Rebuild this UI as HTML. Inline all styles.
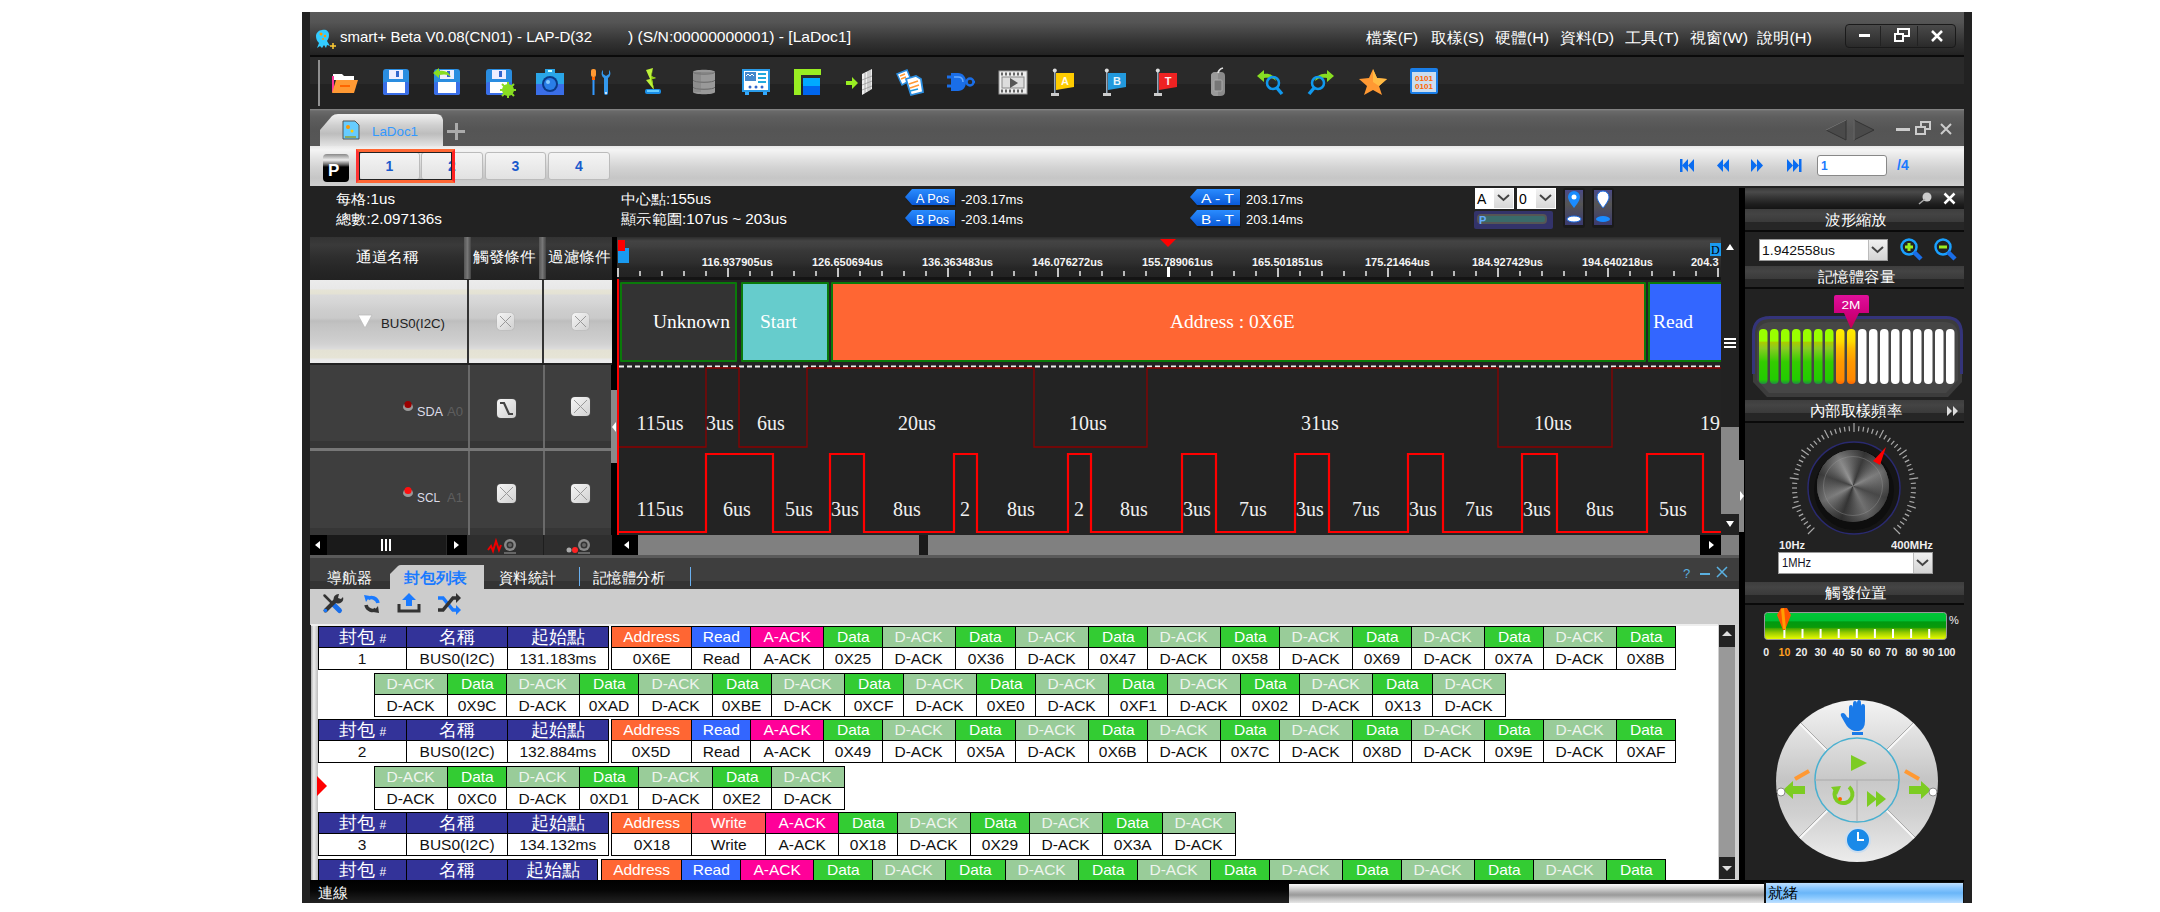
<!DOCTYPE html><html><head><meta charset="utf-8"><style>
html,body{margin:0;padding:0;background:#fff;width:2160px;height:912px;overflow:hidden}
body{position:relative;font-family:"Liberation Sans",sans-serif}
div{position:absolute;box-sizing:border-box}
.t{white-space:nowrap;line-height:1}
svg{position:absolute;overflow:visible}
</style></head><body>
<div style="left:302px;top:12px;width:1670px;height:891px;background:#222"></div><div style="left:310px;top:12px;width:1654px;height:43px;background:linear-gradient(#5a5a5a 0px,#555 10px,#444 20px,#333 30px,#262626 40px,#222 43px)"></div><div style="left:310px;top:55px;width:1654px;height:2px;background:#0a0a0a"></div><div style="left:310px;top:57px;width:1654px;height:27px;background:#2a2a2a"></div><div style="left:310px;top:84px;width:1654px;height:25px;background:#222"></div><svg style="left:314px;top:28px" width="24" height="24" viewBox="0 0 24 24">
<path d="M8 2c4-1 7 1 7 5c0 3-1 4-2 6l3 5l-3-1l-1 3l-2-3l-2 3l-2-2l-3 2l2-5c-2-2-3-4-3-7c0-3 3-6 6-6z" fill="#33ccff"/>
<circle cx="7" cy="6" r="1.5" fill="#f90"/><circle cx="11" cy="8" r="1.3" fill="#f90"/><circle cx="9" cy="11" r="1" fill="#f90"/>
<path d="M19 15v6M16 18h6" stroke="#fc3" stroke-width="1.5"/></svg><div id="f1" class="t" style="left:340.00px;top:30.23px;font-family:'Liberation Sans',sans-serif;font-size:14.5px;color:#fff;transform-origin:0 0;transform:scaleX(1.0337);">smart+ Beta V0.08(CN01) - LAP-D(32</div><div id="f2" class="t" style="left:628.00px;top:30.23px;font-family:'Liberation Sans',sans-serif;font-size:14.5px;color:#fff;transform-origin:0 0;transform:scaleX(1.0807);">) (S/N:00000000001) - [LaDoc1]</div><div id="f3" class="t" style="left:1366.00px;top:30.30px;font-family:'Liberation Sans',sans-serif;font-size:15px;color:#fff;transform-origin:0 0;transform:scaleX(1.0579);">檔案(F)</div><div id="f4" class="t" style="left:1431.00px;top:30.30px;font-family:'Liberation Sans',sans-serif;font-size:15px;color:#fff;transform-origin:0 0;transform:scaleX(1.0600);">取樣(S)</div><div id="f5" class="t" style="left:1495.00px;top:30.30px;font-family:'Liberation Sans',sans-serif;font-size:15px;color:#fff;transform-origin:0 0;transform:scaleX(1.0624);">硬體(H)</div><div id="f6" class="t" style="left:1560.00px;top:30.30px;font-family:'Liberation Sans',sans-serif;font-size:15px;color:#fff;transform-origin:0 0;transform:scaleX(1.0624);">資料(D)</div><div id="f7" class="t" style="left:1625.00px;top:30.30px;font-family:'Liberation Sans',sans-serif;font-size:15px;color:#fff;transform-origin:0 0;transform:scaleX(1.0985);">工具(T)</div><div id="f8" class="t" style="left:1690.00px;top:30.30px;font-family:'Liberation Sans',sans-serif;font-size:15px;color:#fff;transform-origin:0 0;transform:scaleX(1.0710);">視窗(W)</div><div id="f9" class="t" style="left:1757.00px;top:30.30px;font-family:'Liberation Sans',sans-serif;font-size:15px;color:#fff;transform-origin:0 0;transform:scaleX(1.0821);">說明(H)</div><div style="left:1845px;top:24px;width:111px;height:24px;border-radius:4px;background:linear-gradient(#4a4a4a,#2a2a2a);border:1px solid #1a1a1a"></div><div style="left:1880px;top:26px;width:1px;height:20px;background:#222"></div><div style="left:1917px;top:26px;width:1px;height:20px;background:#222"></div><div style="left:1859px;top:34px;width:11px;height:3px;background:#fff"></div><div style="left:1897px;top:28px;width:13px;height:9px;border:2px solid #fff;"></div><div style="left:1894px;top:33px;width:10px;height:9px;border:2px solid #fff;background:#333"></div><svg style="left:1930px;top:29px" width="14" height="14"><path d="M2 2L12 12M12 2L2 12" stroke="#fff" stroke-width="2.5"/></svg><div style="left:318px;top:60px;width:2px;height:46px;background:linear-gradient(90deg,#555,#ccc,#555)"></div><svg style="left:330.5px;top:68px" width="28" height="28" viewBox="0 0 28 28"><path d="M2 6h9l2 2h10v4H2z" fill="#fff"/><path d="M1 8h2v16H1z" fill="#f39"/><path d="M5 12h22l-4 13H1z" fill="#f93"/><path d="M9 17h10v2H9z" fill="#f60"/></svg><svg style="left:381.9px;top:68px" width="28" height="28" viewBox="0 0 28 28"><rect x="1" y="1" width="26" height="26" rx="3" fill="#2a8de0"/><rect x="1" y="14" width="26" height="13" rx="2" fill="#3a6ee8"/><rect x="7" y="2" width="14" height="9" fill="#eef"/><rect x="14" y="3" width="3" height="6" fill="#36c"/><rect x="5" y="14" width="18" height="11" fill="#fff"/></svg><svg style="left:433.3px;top:68px" width="28" height="28" viewBox="0 0 28 28"><rect x="1" y="1" width="26" height="26" rx="3" fill="#2a8de0"/><rect x="1" y="14" width="26" height="13" rx="2" fill="#3a6ee8"/><rect x="7" y="2" width="14" height="9" fill="#eef"/><rect x="14" y="3" width="3" height="6" fill="#36c"/><rect x="5" y="14" width="18" height="11" fill="#fff"/><path d="M0 5l6-5v3c6-1 10 1 12 6c-3-3-7-3-12-2v3z" fill="#8d2"/></svg><svg style="left:484.7px;top:68px" width="28" height="28" viewBox="0 0 28 28"><rect x="1" y="1" width="26" height="26" rx="3" fill="#2a8de0"/><rect x="1" y="14" width="26" height="13" rx="2" fill="#3a6ee8"/><rect x="7" y="2" width="14" height="9" fill="#eef"/><rect x="14" y="3" width="3" height="6" fill="#36c"/><rect x="5" y="14" width="18" height="11" fill="#fff"/><circle cx="23" cy="22" r="6" fill="#8d2"/><circle cx="23" cy="22" r="2" fill="#2a8de0"/><path d="M23 14v16M15 22h16M17 16l12 12M29 16l-12 12" stroke="#8d2" stroke-width="2"/></svg><svg style="left:536.1px;top:68px" width="28" height="28" viewBox="0 0 28 28"><rect x="0" y="5" width="28" height="22" fill="#2aa6e8"/><rect x="0" y="16" width="28" height="11" fill="#3a6ee8"/><rect x="9" y="1" width="10" height="5" fill="#2aa6e8"/><rect x="12" y="2" width="4" height="2" fill="#cff"/><circle cx="14" cy="16" r="8" fill="#0b3a88"/><circle cx="14" cy="16" r="6" fill="#2a7ee8"/><circle cx="12" cy="14" r="2" fill="#8cf"/></svg><svg style="left:587.5px;top:68px" width="28" height="28" viewBox="0 0 28 28"><rect x="3" y="1" width="5" height="8" rx="2" fill="#f93"/><rect x="4" y="9" width="3" height="3" fill="#f60"/><rect x="4.5" y="12" width="2" height="15" fill="#39f"/><path d="M15 2c-2 2-2 6 1 8v15a2 2 0 0 0 4 0V10c3-2 3-6 1-8v4l-3 2l-3-2z" fill="#39e"/><circle cx="18" cy="25" r="1" fill="#fff"/></svg><svg style="left:638.9px;top:68px" width="28" height="28" viewBox="0 0 28 28"><path d="M7 2L14 0L12 8L17 10L13 11L15 22L7 12L11 11z" fill="#bdf23a"/><path d="M14 0L12 8L17 10L13 11L15 22L12 12z" fill="#8ccc10"/><rect x="6" y="21" width="16" height="5" rx="2" fill="#1a8ee8"/><rect x="8" y="22" width="12" height="2" fill="#6cf"/></svg><svg style="left:690.3px;top:68px" width="28" height="28" viewBox="0 0 28 28"><path d="M3 4c0-3 22-3 22 0v20c0 3-22 3-22 0z" fill="#999"/><path d="M3 4c0 3 22 3 22 0" stroke="#777" fill="#888"/><path d="M3 12c0 3 22 3 22 0M3 19c0 3 22 3 22 0" stroke="#666" fill="none" stroke-width="1"/><rect x="3" y="4" width="8" height="20" fill="#777" opacity=".4"/></svg><svg style="left:741.7px;top:68px" width="28" height="28" viewBox="0 0 28 28"><rect x="0" y="1" width="28" height="23" fill="#2a9be8"/><rect x="2" y="3" width="24" height="19" fill="#fff"/><rect x="3" y="4" width="11" height="9" fill="#48c"/><path d="M4 8l2-2l2 2l2-2l2 2" stroke="#fff" fill="none"/><rect x="16" y="5" width="8" height="2" fill="#2ad"/><rect x="16" y="9" width="8" height="2" fill="#2ad"/><rect x="16" y="13" width="8" height="2" fill="#2ad"/><circle cx="8" cy="19" r="1.5" fill="#36c"/><circle cx="14" cy="19" r="1.5" fill="#36c"/><circle cx="20" cy="19" r="1.5" fill="#36c"/><rect x="3" y="24" width="4" height="3" fill="#3af"/><rect x="21" y="24" width="4" height="3" fill="#3af"/></svg><svg style="left:793.1px;top:68px" width="28" height="28" viewBox="0 0 28 28"><rect x="1" y="1" width="27" height="6" fill="#9e2"/><rect x="1" y="1" width="7" height="26" fill="#9e2"/><rect x="10" y="10" width="17" height="17" fill="#0af"/><rect x="10" y="18" width="17" height="9" fill="#06e"/></svg><svg style="left:844.5px;top:68px" width="28" height="28" viewBox="0 0 28 28"><path d="M1 13h6v-4l6 6l-6 6v-4H1z" fill="#9e2"/><path d="M17 6l10-5v20l-10 6z" fill="#eee"/><path d="M17 12l10-4M17 17l10-4M17 22l10-4M20 5v20M23 3v20M25 2v20" stroke="#999" stroke-width=".8"/></svg><svg style="left:895.9px;top:68px" width="28" height="28" viewBox="0 0 28 28"><path d="M1 6L11 2L15 12L6 17z" fill="#fff" stroke="#2a8de0" stroke-width="1.5"/><path d="M4 8L9 6M5 11L10 9" stroke="#f93" stroke-width="1.5"/><path d="M10 11L20 8L25 11L27 24L15 27z" fill="#fff" stroke="#2a8de0" stroke-width="1.8"/><path d="M13 16L22 13M14 20L23 17" stroke="#f93" stroke-width="1.6"/><path d="M14 23L22 21" stroke="#29d" stroke-width="1.5"/></svg><svg style="left:947.3px;top:68px" width="28" height="28" viewBox="0 0 28 28"><path d="M0 9h5M0 18h5" stroke="#1a6ee8" stroke-width="3"/><path d="M4 5h7c5 0 8 4 8 9s-3 9-8 9H4z" fill="#1a6ee8"/><circle cx="23" cy="14" r="3.5" fill="none" stroke="#1a6ee8" stroke-width="2.5"/><path d="M26 14h2" stroke="#1a6ee8" stroke-width="2"/><path d="M7 9h4c3 0 5 2 5 5" stroke="#6af" fill="none" stroke-width="1.5"/></svg><svg style="left:998.7px;top:68px" width="28" height="28" viewBox="0 0 28 28"><rect x="0" y="3" width="28" height="23" fill="#eee"/><rect x="0" y="3" width="28" height="23" fill="none" stroke="#999"/><path d="M2 6h24M2 23h24" stroke="#666" stroke-width="3" stroke-dasharray="2 2"/><rect x="3" y="9" width="22" height="11" fill="#ddd" stroke="#888"/><path d="M11 10l8 5l-8 5z" fill="#555"/></svg><svg style="left:1050.1px;top:68px" width="28" height="28" viewBox="0 0 28 28"><rect x="4" y="2" width="1.5" height="24" fill="#9ab"/><circle cx="4.8" cy="2.5" r="2" fill="#ddd"/><rect x="1" y="25" width="8" height="3" fill="#ccc"/><path d="M6 5l18 0l0 14l-18 3z" fill="#fc0"/><text x="15" y="17" font-size="11" font-family="Liberation Sans" font-weight="bold" fill="#fff" text-anchor="middle" opacity=".9">A</text></svg><svg style="left:1101.5px;top:68px" width="28" height="28" viewBox="0 0 28 28"><rect x="4" y="2" width="1.5" height="24" fill="#9ab"/><circle cx="4.8" cy="2.5" r="2" fill="#ddd"/><rect x="1" y="25" width="8" height="3" fill="#ccc"/><path d="M6 5l18 0l0 14l-18 3z" fill="#29d"/><text x="15" y="17" font-size="11" font-family="Liberation Sans" font-weight="bold" fill="#fff" text-anchor="middle" opacity=".9">B</text></svg><svg style="left:1152.9px;top:68px" width="28" height="28" viewBox="0 0 28 28"><rect x="4" y="2" width="1.5" height="24" fill="#9ab"/><circle cx="4.8" cy="2.5" r="2" fill="#ddd"/><rect x="1" y="25" width="8" height="3" fill="#ccc"/><path d="M6 5l18 0l0 14l-18 3z" fill="#e22"/><text x="15" y="17" font-size="11" font-family="Liberation Sans" font-weight="bold" fill="#fff" text-anchor="middle" opacity=".9">T</text></svg><svg style="left:1204.3px;top:68px" width="28" height="28" viewBox="0 0 28 28"><path d="M7 8Q7 4 12 4H17Q21 4 21 8V24Q21 28 16 28H12Q7 28 7 24z" fill="#8a8a8a"/><path d="M7 8Q7 4 12 4H14V28H12Q7 28 7 24z" fill="#9a9a9a"/><rect x="10" y="12" width="8" height="11" rx="1" fill="#777" stroke="#aaa"/><path d="M14 5Q15 1 19 0" stroke="#ddd" stroke-width="1.8" fill="none"/></svg><svg style="left:1255.7px;top:68px" width="28" height="28" viewBox="0 0 28 28"><path d="M1 8l7-6v4c6-1 11 2 12 7c-3-3-7-4-12-3v4z" fill="#8d2"/><circle cx="17" cy="15" r="6" fill="none" stroke="#19e" stroke-width="2.5"/><path d="M21 20l5 6" stroke="#19e" stroke-width="3.5"/></svg><svg style="left:1307.1px;top:68px" width="28" height="28" viewBox="0 0 28 28"><path d="M27 8l-7-6v4c-6-1-11 2-12 7c3-3 7-4 12-3v4z" fill="#8d2"/><circle cx="11" cy="15" r="6" fill="none" stroke="#19e" stroke-width="2.5"/><path d="M7 20l-5 6" stroke="#19e" stroke-width="3.5"/></svg><svg style="left:1358.5px;top:68px" width="28" height="28" viewBox="0 0 28 28"><path d="M14 1l4 9l10 1l-8 7l3 9l-9-5l-9 5l3-9l-8-7l10-1z" fill="#f93"/><path d="M14 1l4 9l10 1l-8 7l-6-4z" fill="#fb4"/></svg><svg style="left:1409.9px;top:68px" width="28" height="28" viewBox="0 0 28 28"><rect x="0" y="0" width="28" height="26" rx="2" fill="#1a7ee8"/><rect x="2" y="4" width="24" height="20" fill="#cde"/><text x="14" y="13" font-size="8" font-family="Liberation Sans" font-weight="bold" fill="#f60" text-anchor="middle">0101</text><text x="14" y="21" font-size="8" font-family="Liberation Sans" font-weight="bold" fill="#f60" text-anchor="middle">0101</text></svg><div style="left:310px;top:109px;width:1654px;height:37px;background:linear-gradient(#8a8a8a 0px,#6a6a6a 2px,#5e5e5e 8px,#555 20px,#575757 37px)"></div><svg style="left:320px;top:114px" width="124" height="33"><path d="M0 33V16L12 2Q14 0 18 0H116Q122 0 123 6V33z" fill="url(#tabg)"/><defs><linearGradient id="tabg" x1="0" y1="0" x2="0" y2="1"><stop offset="0" stop-color="#f0f0f0"/><stop offset=".35" stop-color="#cfcfcf"/><stop offset=".6" stop-color="#bdbdbd"/><stop offset="1" stop-color="#e6e6e6"/></linearGradient></defs></svg><svg style="left:342px;top:120px" width="18" height="20" viewBox="0 0 18 20"><path d="M1 1h12l4 4v14H1z" fill="#6cf" stroke="#555" stroke-width="1"/><circle cx="6" cy="7" r="2" fill="#f90"/><circle cx="10" cy="11" r="1.5" fill="#fc0"/><path d="M3 17h11" stroke="#8a6" stroke-width="2"/></svg><div id="f10" class="t" style="left:372.00px;top:124.50px;font-family:'Liberation Sans',sans-serif;font-size:13px;color:#3399ff;transform-origin:0 0;transform:scaleX(1.0265);">LaDoc1</div><div style="left:447px;top:130px;width:18px;height:3px;background:#aaa"></div><div style="left:454.5px;top:123px;width:3px;height:17px;background:#aaa"></div><svg style="left:1824px;top:119px" width="52" height="22"><path d="M22 1L2 11L22 21z" fill="#4a4a4a" stroke="#333"/><path d="M30 1L50 11L30 21z" fill="#4a4a4a" stroke="#333"/><path d="M22 1L2 11" stroke="#777"/><path d="M30 1V21" stroke="#777"/></svg><div style="left:1896px;top:128px;width:14px;height:3px;background:#ccc"></div><div style="left:1920px;top:121px;width:11px;height:9px;border:2px solid #ccc"></div><div style="left:1915px;top:126px;width:11px;height:9px;border:2px solid #ccc;background:#555"></div><svg style="left:1939px;top:122px" width="14" height="14"><path d="M2 2L12 12M12 2L2 12" stroke="#ccc" stroke-width="2"/></svg><div style="left:310px;top:146px;width:1654px;height:40px;background:linear-gradient(#e8e8e8 0px,#f4f4f4 4px,#e4e4e4 12px,#d2d2d2 22px,#c6c6c6 32px,#cfcfcf 40px)"></div><div style="left:323px;top:154px;width:26px;height:28px;border-radius:4px;background:linear-gradient(#888 0px,#eee 6px,#555 11px,#000 13px,#000 28px)"></div><div id="f11" class="t" style="left:328.00px;top:161.61px;font-family:'Liberation Sans',sans-serif;font-size:17px;color:#fff;font-weight:bold;transform-origin:0 0;">P</div><div style="left:359px;top:152px;width:61px;height:28px;border-radius:3px;background:linear-gradient(#f4f4f4,#e2e2e2);border:1px solid #bbb"></div><div id="f12" class="t" style="left:385.60px;top:159.15px;font-family:'Liberation Sans',sans-serif;font-size:14px;color:#1a5acc;font-weight:bold;transform-origin:3.90px 0;">1</div><div style="left:421px;top:152px;width:62px;height:28px;border-radius:3px;background:linear-gradient(#f4f4f4,#e2e2e2);border:1px solid #bbb"></div><div id="f13" class="t" style="left:448.10px;top:159.15px;font-family:'Liberation Sans',sans-serif;font-size:14px;color:#1a5acc;font-weight:bold;transform-origin:3.90px 0;">2</div><div style="left:485px;top:152px;width:61px;height:28px;border-radius:3px;background:linear-gradient(#f4f4f4,#e2e2e2);border:1px solid #bbb"></div><div id="f14" class="t" style="left:511.60px;top:159.15px;font-family:'Liberation Sans',sans-serif;font-size:14px;color:#1a5acc;font-weight:bold;transform-origin:3.90px 0;">3</div><div style="left:548px;top:152px;width:62px;height:28px;border-radius:3px;background:linear-gradient(#f4f4f4,#e2e2e2);border:1px solid #bbb"></div><div id="f15" class="t" style="left:575.10px;top:159.15px;font-family:'Liberation Sans',sans-serif;font-size:14px;color:#1a5acc;font-weight:bold;transform-origin:3.90px 0;">4</div><div style="left:356px;top:149px;width:99px;height:34px;border:3px solid #ff6633;border-left-color:#f33;border-right-color:#f22"></div><div style="left:359px;top:152px;width:93px;height:28px;border:1px solid #222"></div><svg style="left:1678px;top:158px" width="130" height="16"><g fill="#0a6cf0"><rect x="2" y="1" width="2.5" height="13"/><path d="M4 7.5L10 1V14z"/><path d="M10 7.5L16 1V14z"/><path d="M39 7.5L45 1V14z"/><path d="M45 7.5L51 1V14z"/><path d="M73 1L79 7.5L73 14z"/><path d="M79 1L85 7.5L79 14z"/><path d="M109 1L115 7.5L109 14z"/><path d="M115 1L121 7.5L115 14z"/><rect x="121" y="1" width="2.5" height="13"/></g></svg><div style="left:1817px;top:155px;width:70px;height:21px;background:#fff;border:1px solid #888;border-radius:3px"></div><div id="f16" class="t" style="left:1821.00px;top:159.84px;font-family:'Liberation Sans',sans-serif;font-size:12px;color:#1a7aff;font-weight:bold;transform-origin:0 0;">1</div><div id="f17" class="t" style="left:1897.00px;top:158.15px;font-family:'Liberation Sans',sans-serif;font-size:14px;color:#1a7aff;font-weight:bold;transform-origin:0 0;">/4</div><div style="left:310px;top:186px;width:1429px;height:51px;background:#222"></div><div id="f18" class="t" style="left:336.00px;top:191.65px;font-family:'Liberation Sans',sans-serif;font-size:14px;color:#fff;transform-origin:0 0;transform:scaleX(1.0832);">每格:1us</div><div id="f19" class="t" style="left:336.00px;top:211.65px;font-family:'Liberation Sans',sans-serif;font-size:14px;color:#fff;transform-origin:0 0;transform:scaleX(1.0894);">總數:2.097136s</div><div id="f20" class="t" style="left:621.00px;top:191.65px;font-family:'Liberation Sans',sans-serif;font-size:14px;color:#fff;transform-origin:0 0;transform:scaleX(1.0708);">中心點:155us</div><div id="f21" class="t" style="left:621.00px;top:211.65px;font-family:'Liberation Sans',sans-serif;font-size:14px;color:#fff;transform-origin:0 0;transform:scaleX(1.0911);">顯示範圍:107us ~ 203us</div><svg style="left:905px;top:189px" width="52" height="18"><path d="M8 1H51V17H8L1 9z" fill="#1a1a1a" transform="translate(0,1)"/><path d="M7 0H50V16H7L0 8z" fill="url(#bg905189)"/><defs><linearGradient id="bg905189" x1="0" y1="0" x2="0" y2="1"><stop offset="0" stop-color="#2a8cff"/><stop offset="1" stop-color="#0a5ad8"/></linearGradient></defs></svg><div id="f22" class="t" style="left:916.00px;top:191.50px;font-family:'Liberation Sans',sans-serif;font-size:13px;color:#fff;transform-origin:0 0;transform:scaleX(0.9715);">A Pos</div><svg style="left:905px;top:210px" width="52" height="18"><path d="M8 1H51V17H8L1 9z" fill="#1a1a1a" transform="translate(0,1)"/><path d="M7 0H50V16H7L0 8z" fill="url(#bg905210)"/><defs><linearGradient id="bg905210" x1="0" y1="0" x2="0" y2="1"><stop offset="0" stop-color="#2a8cff"/><stop offset="1" stop-color="#0a5ad8"/></linearGradient></defs></svg><div id="f23" class="t" style="left:916.00px;top:212.50px;font-family:'Liberation Sans',sans-serif;font-size:13px;color:#fff;transform-origin:0 0;transform:scaleX(0.9514);">B Pos</div><svg style="left:1190px;top:189px" width="52" height="18"><path d="M8 1H51V17H8L1 9z" fill="#1a1a1a" transform="translate(0,1)"/><path d="M7 0H50V16H7L0 8z" fill="url(#bg1190189)"/><defs><linearGradient id="bg1190189" x1="0" y1="0" x2="0" y2="1"><stop offset="0" stop-color="#2a8cff"/><stop offset="1" stop-color="#0a5ad8"/></linearGradient></defs></svg><div id="f24" class="t" style="left:1201.00px;top:191.50px;font-family:'Liberation Sans',sans-serif;font-size:13px;color:#fff;transform-origin:0 0;transform:scaleX(1.2124);">A - T</div><svg style="left:1190px;top:210px" width="52" height="18"><path d="M8 1H51V17H8L1 9z" fill="#1a1a1a" transform="translate(0,1)"/><path d="M7 0H50V16H7L0 8z" fill="url(#bg1190210)"/><defs><linearGradient id="bg1190210" x1="0" y1="0" x2="0" y2="1"><stop offset="0" stop-color="#2a8cff"/><stop offset="1" stop-color="#0a5ad8"/></linearGradient></defs></svg><div id="f25" class="t" style="left:1201.00px;top:212.50px;font-family:'Liberation Sans',sans-serif;font-size:13px;color:#fff;transform-origin:0 0;transform:scaleX(1.1812);">B - T</div><div id="f26" class="t" style="left:961.00px;top:192.50px;font-family:'Liberation Sans',sans-serif;font-size:13px;color:#fff;transform-origin:0 0;transform:scaleX(1.0094);">-203.17ms</div><div id="f27" class="t" style="left:961.00px;top:213.00px;font-family:'Liberation Sans',sans-serif;font-size:13px;color:#fff;transform-origin:0 0;transform:scaleX(1.0094);">-203.14ms</div><div id="f28" class="t" style="left:1246.00px;top:192.50px;font-family:'Liberation Sans',sans-serif;font-size:13px;color:#fff;transform-origin:0 0;transform:scaleX(0.9984);">203.17ms</div><div id="f29" class="t" style="left:1246.00px;top:213.00px;font-family:'Liberation Sans',sans-serif;font-size:13px;color:#fff;transform-origin:0 0;transform:scaleX(0.9984);">203.14ms</div><div style="left:1475px;top:188px;width:39px;height:21px;background:#fff"></div><div style="left:1494px;top:189px;width:19px;height:19px;background:linear-gradient(#f2f2f2,#d8d8d8)"></div><svg style="left:1497px;top:194px" width="13" height="8"><path d="M1 1L6.5 6L12 1" stroke="#444" stroke-width="2" fill="none"/></svg><div id="f30" class="t" style="left:1477.00px;top:192.15px;font-family:'Liberation Sans',sans-serif;font-size:14px;color:#000;transform-origin:0 0;">A</div><div style="left:1517px;top:188px;width:39px;height:21px;background:#fff"></div><div style="left:1536px;top:189px;width:19px;height:19px;background:linear-gradient(#f2f2f2,#d8d8d8)"></div><svg style="left:1539px;top:194px" width="13" height="8"><path d="M1 1L6.5 6L12 1" stroke="#444" stroke-width="2" fill="none"/></svg><div id="f31" class="t" style="left:1519.00px;top:192.15px;font-family:'Liberation Sans',sans-serif;font-size:14px;color:#000;transform-origin:0 0;">0</div><div style="left:1474px;top:211px;width:79px;height:18px;background:#33336a;border-radius:2px"></div><div style="left:1477px;top:214px;width:70px;height:10px;background:#3a6a6a;border:2px solid #555;border-radius:4px"></div><div id="f32" class="t" style="left:1479.00px;top:214.69px;font-family:'Liberation Sans',sans-serif;font-size:11px;color:#6af;font-weight:bold;transform-origin:0 0;">P</div><div style="left:1563px;top:188px;width:22px;height:40px;background:#1a1a1a;border-radius:3px"></div><div style="left:1565px;top:190px;width:18px;height:35px;background:linear-gradient(#4a4a88,#555 40%,#3a3a70)"></div><svg style="left:1564px;top:188px" width="20" height="40"><path d="M10 3a6 6 0 0 1 6 6c0 4-6 11-6 11s-6-7-6-11a6 6 0 0 1 6-6z" fill="#1a8cff"/><circle cx="10" cy="9" r="2.5" fill="#fff"/><ellipse cx="10" cy="31" rx="7" ry="3" fill="#fff" stroke="#1a6ee8"/></svg><div style="left:1592px;top:188px;width:22px;height:40px;background:#1a1a1a;border-radius:3px"></div><div style="left:1594px;top:190px;width:18px;height:35px;background:linear-gradient(#4a4a88,#555 40%,#3a3a70)"></div><svg style="left:1593px;top:188px" width="20" height="40"><path d="M10 3a6 6 0 0 1 6 6c0 4-6 11-6 11s-6-7-6-11a6 6 0 0 1 6-6z" fill="#fff" stroke="#1a6ee8"/><ellipse cx="10" cy="31" rx="7" ry="3" fill="#1a8cff"/></svg><div style="left:310px;top:237px;width:302px;height:42px;background:linear-gradient(#333 0px,#3a3a3a 8px,#2e2e2e 20px,#262626 32px,#222 42px)"></div><div style="left:464px;top:237px;width:7px;height:42px;background:linear-gradient(90deg,#555,#777,#444)"></div><div style="left:539px;top:237px;width:7px;height:42px;background:linear-gradient(90deg,#555,#777,#444)"></div><div id="f33" class="t" style="left:356.00px;top:249.30px;font-family:'Liberation Sans',sans-serif;font-size:15px;color:#fff;transform-origin:0 0;transform:scaleX(1.0500);">通道名稱</div><div id="f34" class="t" style="left:473.00px;top:249.30px;font-family:'Liberation Sans',sans-serif;font-size:15px;color:#fff;transform-origin:0 0;transform:scaleX(1.0500);">觸發條件</div><div id="f35" class="t" style="left:548.00px;top:249.30px;font-family:'Liberation Sans',sans-serif;font-size:15px;color:#fff;transform-origin:0 0;transform:scaleX(1.0500);">過濾條件</div><div style="left:612px;top:237px;width:5px;height:318px;background:#000"></div><div style="left:310px;top:280px;width:302px;height:83px;background:linear-gradient(#ececec 0px,#e8e8e8 9px,#e6e4d6 10px,#e4e2d4 14px,#dadada 15px,#d6d6d6 22px,#cecece 30px,#cacaca 38px,#bdbdbd 41px,#c2c2c2 44px,#c8c8c8 52px,#cccccc 58px,#d2d2d2 64px,#dcdcdc 69px,#e4e2d4 70px,#e6e4d6 78px,#eaeaea 79px,#ececec 83px)"></div><div style="left:310px;top:363px;width:302px;height:2px;background:#222"></div><div style="left:467px;top:280px;width:2px;height:83px;background:#333"></div><div style="left:542px;top:280px;width:2px;height:83px;background:#333"></div><svg style="left:357px;top:314px" width="16" height="15"><path d="M1 1H15L8 14z" fill="#fff" stroke="#bbb" stroke-width=".8"/></svg><div id="f36" class="t" style="left:381.00px;top:316.50px;font-family:'Liberation Sans',sans-serif;font-size:13px;color:#222;transform-origin:0 0;transform:scaleX(1.0181);">BUS0(I2C)</div><div style="left:497px;top:313px;width:17px;height:17px;border-radius:4px;background:linear-gradient(135deg,#f6f6f6,#d0d0d0);box-shadow:0 0 1px #888"></div><svg style="left:497px;top:313px" width="17" height="17"><path d="M3 3L14 14M14 3L3 14" stroke="#999" stroke-width="1"/></svg><div style="left:572px;top:313px;width:17px;height:17px;border-radius:4px;background:linear-gradient(135deg,#f6f6f6,#d0d0d0);box-shadow:0 0 1px #888"></div><svg style="left:572px;top:313px" width="17" height="17"><path d="M3 3L14 14M14 3L3 14" stroke="#999" stroke-width="1"/></svg><div style="left:310px;top:365px;width:302px;height:83px;background:#3e3e3e"></div><div style="left:310px;top:441px;width:302px;height:7px;background:#363636"></div><div style="left:468px;top:365px;width:2px;height:83px;background:#6a6a6a"></div><div style="left:543px;top:365px;width:2px;height:83px;background:#6a6a6a"></div><svg style="left:400px;top:397.5px" width="16" height="16"><ellipse cx="8" cy="9" rx="5" ry="4" fill="#999"/><circle cx="8" cy="6.5" r="3.6" fill="#9a0000"/></svg><div id="f37" class="t" style="left:417.00px;top:404.57px;font-family:'Liberation Sans',sans-serif;font-size:13.5px;color:#dcdce8;transform-origin:0 0;transform:scaleX(0.9364);">SDA</div><div id="f38" class="t" style="left:447.00px;top:404.57px;font-family:'Liberation Sans',sans-serif;font-size:13.5px;color:#5e5e5e;transform-origin:0 0;transform:scaleX(0.9688);">A0</div><div style="left:571px;top:397px;width:19px;height:19px;border-radius:4px;background:linear-gradient(135deg,#f6f6f6,#d0d0d0);box-shadow:0 0 1px #888"></div><svg style="left:571px;top:397px" width="19" height="19"><path d="M3 3L16 16M16 3L3 16" stroke="#999" stroke-width="1"/></svg><div style="left:310px;top:451px;width:302px;height:84px;background:#3e3e3e"></div><div style="left:310px;top:528px;width:302px;height:7px;background:#363636"></div><div style="left:468px;top:451px;width:2px;height:84px;background:#6a6a6a"></div><div style="left:543px;top:451px;width:2px;height:84px;background:#6a6a6a"></div><svg style="left:400px;top:484.0px" width="16" height="16"><ellipse cx="8" cy="9" rx="5" ry="4" fill="#999"/><circle cx="8" cy="6.5" r="3.6" fill="#ff1010"/></svg><div id="f39" class="t" style="left:417.00px;top:491.07px;font-family:'Liberation Sans',sans-serif;font-size:13.5px;color:#dcdce8;transform-origin:0 0;transform:scaleX(0.8757);">SCL</div><div id="f40" class="t" style="left:447.00px;top:491.07px;font-family:'Liberation Sans',sans-serif;font-size:13.5px;color:#5e5e5e;transform-origin:0 0;transform:scaleX(0.9688);">A1</div><div style="left:571px;top:484px;width:19px;height:19px;border-radius:4px;background:linear-gradient(135deg,#f6f6f6,#d0d0d0);box-shadow:0 0 1px #888"></div><svg style="left:571px;top:484px" width="19" height="19"><path d="M3 3L16 16M16 3L3 16" stroke="#999" stroke-width="1"/></svg><div style="left:310px;top:448px;width:302px;height:3px;background:#777"></div><div style="left:497px;top:399px;width:19px;height:19px;border-radius:4px;background:linear-gradient(135deg,#f6f6f6,#d0d0d0);box-shadow:0 0 1px #888"></div><svg style="left:497px;top:399px" width="19" height="19"><path d="M3 4H7L12 15H16" stroke="#444" stroke-width="2.2" fill="none"/></svg><div style="left:497px;top:484px;width:19px;height:19px;border-radius:4px;background:linear-gradient(135deg,#f6f6f6,#d0d0d0);box-shadow:0 0 1px #888"></div><svg style="left:497px;top:484px" width="19" height="19"><path d="M3 3L16 16M16 3L3 16" stroke="#999" stroke-width="1"/></svg><div style="left:310px;top:535px;width:302px;height:20px;background:#2a2a2a"></div><div style="left:310px;top:535px;width:17px;height:20px;background:#000"></div><svg style="left:314px;top:540px" width="8" height="10"><path d="M6 1L1 5L6 9z" fill="#fff"/></svg><div style="left:327px;top:535px;width:119px;height:20px;background:#1a1a1a"></div><div style="left:381px;top:539px;width:2px;height:12px;background:#fff"></div><div style="left:385px;top:539px;width:2px;height:12px;background:#fff"></div><div style="left:389px;top:539px;width:2px;height:12px;background:#fff"></div><div style="left:447px;top:535px;width:20px;height:20px;background:#000"></div><svg style="left:453px;top:540px" width="8" height="10"><path d="M1 1L6 5L1 9z" fill="#fff"/></svg><div style="left:467px;top:535px;width:145px;height:20px;background:#2e2e2e"></div><div style="left:543px;top:535px;width:1px;height:20px;background:#1e1e1e"></div><svg style="left:486px;top:537px" width="34" height="18"><path d="M2 13L5 9L7 14L10 4L13 13L15 8" stroke="#e00" stroke-width="2" fill="none"/><circle cx="24" cy="8" r="6" fill="#888"/><circle cx="24" cy="8" r="3.5" fill="#333"/><circle cx="24" cy="8" r="2" fill="#666"/><rect x="18" y="15" width="12" height="2" fill="#666"/></svg><svg style="left:564px;top:537px" width="34" height="18"><circle cx="5" cy="13" r="2.5" fill="#aaa"/><circle cx="11" cy="13" r="3" fill="#f22"/><circle cx="20" cy="8" r="6" fill="#888"/><circle cx="20" cy="8" r="3.5" fill="#333"/><circle cx="20" cy="8" r="2" fill="#666"/><rect x="14" y="15" width="12" height="2" fill="#666"/></svg><div style="left:310px;top:555px;width:1429px;height:3px;background:#5a5a5a"></div><div style="left:611px;top:365px;width:6px;height:170px;background:#000"></div><div style="left:611px;top:390px;width:6px;height:73px;background:#8a8a8a"></div><svg style="left:611px;top:421px" width="6" height="12"><path d="M5 1L1 6L5 11z" fill="#fff"/></svg><div style="left:617px;top:237px;width:1104px;height:298px;background:#232323"></div><div style="left:617px;top:237px;width:1104px;height:42px;background:linear-gradient(#2c2c2c 0px,#444 4px,#404040 9px,#383838 14px,#333 20px,#2e2e2e 26px,#262626 31px,#222 42px)"></div><div style="left:617px;top:277px;width:1104px;height:3px;background:#141414"></div><svg style="left:617px;top:237px" width="1104" height="42"><rect x="0.2" y="31" width="1.6" height="9" fill="#eee"/><rect x="22.2" y="34" width="1.6" height="5" fill="#ddd"/><rect x="44.2" y="34" width="1.6" height="5" fill="#ddd"/><rect x="66.2" y="34" width="1.6" height="5" fill="#ddd"/><rect x="88.2" y="34" width="1.6" height="5" fill="#ddd"/><rect x="110.2" y="31" width="1.6" height="9" fill="#eee"/><rect x="132.2" y="34" width="1.6" height="5" fill="#ddd"/><rect x="154.2" y="34" width="1.6" height="5" fill="#ddd"/><rect x="176.2" y="34" width="1.6" height="5" fill="#ddd"/><rect x="198.2" y="34" width="1.6" height="5" fill="#ddd"/><rect x="220.2" y="31" width="1.6" height="9" fill="#eee"/><rect x="242.2" y="34" width="1.6" height="5" fill="#ddd"/><rect x="264.2" y="34" width="1.6" height="5" fill="#ddd"/><rect x="286.2" y="34" width="1.6" height="5" fill="#ddd"/><rect x="308.2" y="34" width="1.6" height="5" fill="#ddd"/><rect x="330.2" y="31" width="1.6" height="9" fill="#eee"/><rect x="352.2" y="34" width="1.6" height="5" fill="#ddd"/><rect x="374.2" y="34" width="1.6" height="5" fill="#ddd"/><rect x="396.2" y="34" width="1.6" height="5" fill="#ddd"/><rect x="418.2" y="34" width="1.6" height="5" fill="#ddd"/><rect x="440.2" y="31" width="1.6" height="9" fill="#eee"/><rect x="462.2" y="34" width="1.6" height="5" fill="#ddd"/><rect x="484.2" y="34" width="1.6" height="5" fill="#ddd"/><rect x="506.2" y="34" width="1.6" height="5" fill="#ddd"/><rect x="528.2" y="34" width="1.6" height="5" fill="#ddd"/><rect x="550.2" y="31" width="1.6" height="9" fill="#eee"/><rect x="572.2" y="34" width="1.6" height="5" fill="#ddd"/><rect x="594.2" y="34" width="1.6" height="5" fill="#ddd"/><rect x="616.2" y="34" width="1.6" height="5" fill="#ddd"/><rect x="638.2" y="34" width="1.6" height="5" fill="#ddd"/><rect x="660.2" y="31" width="1.6" height="9" fill="#eee"/><rect x="682.2" y="34" width="1.6" height="5" fill="#ddd"/><rect x="704.2" y="34" width="1.6" height="5" fill="#ddd"/><rect x="726.2" y="34" width="1.6" height="5" fill="#ddd"/><rect x="748.2" y="34" width="1.6" height="5" fill="#ddd"/><rect x="770.2" y="31" width="1.6" height="9" fill="#eee"/><rect x="792.2" y="34" width="1.6" height="5" fill="#ddd"/><rect x="814.2" y="34" width="1.6" height="5" fill="#ddd"/><rect x="836.2" y="34" width="1.6" height="5" fill="#ddd"/><rect x="858.2" y="34" width="1.6" height="5" fill="#ddd"/><rect x="880.2" y="31" width="1.6" height="9" fill="#eee"/><rect x="902.2" y="34" width="1.6" height="5" fill="#ddd"/><rect x="924.2" y="34" width="1.6" height="5" fill="#ddd"/><rect x="946.2" y="34" width="1.6" height="5" fill="#ddd"/><rect x="968.2" y="34" width="1.6" height="5" fill="#ddd"/><rect x="990.2" y="31" width="1.6" height="9" fill="#eee"/><rect x="1012.2" y="34" width="1.6" height="5" fill="#ddd"/><rect x="1034.2" y="34" width="1.6" height="5" fill="#ddd"/><rect x="1056.2" y="34" width="1.6" height="5" fill="#ddd"/><rect x="1078.2" y="34" width="1.6" height="5" fill="#ddd"/><rect x="1100.2" y="31" width="1.6" height="9" fill="#eee"/></svg><div style="left:1167px;top:267px;width:3px;height:10px;background:#fff"></div><div id="f41" class="t" style="left:701.82px;top:256.69px;font-family:'Liberation Sans',sans-serif;font-size:11px;color:#f4f4f4;font-weight:bold;transform-origin:35.18px 0;transform:scaleX(1.0091);">116.937905us</div><div id="f42" class="t" style="left:811.52px;top:256.69px;font-family:'Liberation Sans',sans-serif;font-size:11px;color:#f4f4f4;font-weight:bold;transform-origin:35.48px 0;transform:scaleX(1.0007);">126.650694us</div><div id="f43" class="t" style="left:921.52px;top:256.69px;font-family:'Liberation Sans',sans-serif;font-size:11px;color:#f4f4f4;font-weight:bold;transform-origin:35.48px 0;transform:scaleX(1.0007);">136.363483us</div><div id="f44" class="t" style="left:1031.52px;top:256.69px;font-family:'Liberation Sans',sans-serif;font-size:11px;color:#f4f4f4;font-weight:bold;transform-origin:35.48px 0;transform:scaleX(1.0007);">146.076272us</div><div id="f45" class="t" style="left:1141.52px;top:256.69px;font-family:'Liberation Sans',sans-serif;font-size:11px;color:#f4f4f4;font-weight:bold;transform-origin:35.48px 0;transform:scaleX(1.0007);">155.789061us</div><div id="f46" class="t" style="left:1251.52px;top:256.69px;font-family:'Liberation Sans',sans-serif;font-size:11px;color:#f4f4f4;font-weight:bold;transform-origin:35.48px 0;transform:scaleX(1.0007);">165.501851us</div><div id="f47" class="t" style="left:1364.58px;top:256.69px;font-family:'Liberation Sans',sans-serif;font-size:11px;color:#f4f4f4;font-weight:bold;transform-origin:32.42px 0;transform:scaleX(1.0024);">175.21464us</div><div id="f48" class="t" style="left:1471.52px;top:256.69px;font-family:'Liberation Sans',sans-serif;font-size:11px;color:#f4f4f4;font-weight:bold;transform-origin:35.48px 0;transform:scaleX(1.0007);">184.927429us</div><div id="f49" class="t" style="left:1581.52px;top:256.69px;font-family:'Liberation Sans',sans-serif;font-size:11px;color:#f4f4f4;font-weight:bold;transform-origin:35.48px 0;transform:scaleX(1.0007);">194.640218us</div><div style="left:1690px;top:256px;width:31px;height:12px;overflow:hidden"><div id="f50" class="t" style="left:1px;top:0.69px;font-family:'Liberation Sans',sans-serif;font-size:11px;color:#f4f4f4;font-weight:bold;transform-origin:0 0;">204.3</div></div><svg style="left:1160px;top:239px" width="16" height="9"><path d="M0 0H16L8 8z" fill="#f00"/></svg><div style="left:618px;top:240px;width:7px;height:14px;background:#f00"></div><div style="left:618px;top:248px;width:11px;height:15px;background:#1a9af0"></div><div style="left:618px;top:240px;width:7px;height:11px;background:#f00"></div><div style="left:1710px;top:243px;width:11px;height:13px;background:#1a9af0"></div><div id="f51" class="t" style="left:1711.00px;top:243.95px;font-family:'Liberation Serif',serif;font-size:12px;color:#000;transform-origin:0 0;">D</div><div style="left:617px;top:279px;width:2px;height:256px;background:#f00"></div><div style="left:620px;top:282px;width:117px;height:80px;background:#333;border:2px solid #0a7a0a;border-radius:1px"></div><div id="f52" class="t" style="left:653.00px;top:312.17px;font-family:'Liberation Serif',serif;font-size:19.5px;color:#fff;transform-origin:0 0;">Unknown</div><div style="left:741px;top:282px;width:88px;height:80px;background:#66cccc;border:2px solid #0a7a0a;border-radius:1px"></div><div id="f53" class="t" style="left:760.00px;top:312.17px;font-family:'Liberation Serif',serif;font-size:19.5px;color:#fff;transform-origin:0 0;">Start</div><div style="left:831px;top:282px;width:815px;height:80px;background:#ff6633;border:2px solid #0a7a0a;border-radius:1px"></div><div id="f54" class="t" style="left:1170.00px;top:312.17px;font-family:'Liberation Serif',serif;font-size:19.5px;color:#fff;transform-origin:0 0;">Address : 0X6E</div><div style="left:1648px;top:282px;width:73px;height:80px;background:#3366ff;border:2px solid #0a7a0a;border-right:none"></div><div id="f55" class="t" style="left:1653.00px;top:312.17px;font-family:'Liberation Serif',serif;font-size:19.5px;color:#fff;transform-origin:0 0;">Read</div><svg style="left:619px;top:365px" width="1102" height="3"><path d="M0 1.5H1102" stroke="#eee" stroke-width="2" stroke-dasharray="5 3"/></svg><svg style="left:0;top:0" width="2160" height="912"><path d="M619 447 H706 V368 H739 V447 H807 V368 H1034 V447 H1147 V368 H1498 V447 H1612 V368 H1721" stroke="#8a0000" stroke-width="1.3" fill="none"/></svg><svg style="left:0;top:0" width="2160" height="912"><path d="M619 532 H706 V454 H773 V532 H830 V454 H864 V532 H954 V454 H977 V532 H1068 V454 H1091 V532 H1182 V454 H1216 V532 H1295 V454 H1329 V532 H1408 V454 H1443 V532 H1522 V454 H1557 V532 H1647 V454 H1703 V532 H1721" stroke="#ff0000" stroke-width="2.2" fill="none"/></svg><div id="f56" class="t" style="left:636.48px;top:413.25px;font-family:'Liberation Serif',serif;font-size:20px;color:#f0f0f0;transform-origin:23.52px 0;">115us</div><div id="f57" class="t" style="left:706.10px;top:413.25px;font-family:'Liberation Serif',serif;font-size:20px;color:#f0f0f0;transform-origin:13.90px 0;">3us</div><div id="f58" class="t" style="left:757.10px;top:413.25px;font-family:'Liberation Serif',serif;font-size:20px;color:#f0f0f0;transform-origin:13.90px 0;">6us</div><div id="f59" class="t" style="left:898.10px;top:413.25px;font-family:'Liberation Serif',serif;font-size:20px;color:#f0f0f0;transform-origin:18.90px 0;">20us</div><div id="f60" class="t" style="left:1069.10px;top:413.25px;font-family:'Liberation Serif',serif;font-size:20px;color:#f0f0f0;transform-origin:18.90px 0;">10us</div><div id="f61" class="t" style="left:1301.10px;top:413.25px;font-family:'Liberation Serif',serif;font-size:20px;color:#f0f0f0;transform-origin:18.90px 0;">31us</div><div id="f62" class="t" style="left:1534.10px;top:413.25px;font-family:'Liberation Serif',serif;font-size:20px;color:#f0f0f0;transform-origin:18.90px 0;">10us</div><div style="left:1690px;top:405px;width:31px;height:32px;overflow:hidden"><div id="f63" class="t" style="left:10.00px;top:8.25px;font-family:'Liberation Serif',serif;font-size:20px;color:#f0f0f0;transform-origin:0 0;">19</div></div><div id="f64" class="t" style="left:636.48px;top:499.25px;font-family:'Liberation Serif',serif;font-size:20px;color:#f0f0f0;transform-origin:23.52px 0;">115us</div><div id="f65" class="t" style="left:723.10px;top:499.25px;font-family:'Liberation Serif',serif;font-size:20px;color:#f0f0f0;transform-origin:13.90px 0;">6us</div><div id="f66" class="t" style="left:785.10px;top:499.25px;font-family:'Liberation Serif',serif;font-size:20px;color:#f0f0f0;transform-origin:13.90px 0;">5us</div><div id="f67" class="t" style="left:831.10px;top:499.25px;font-family:'Liberation Serif',serif;font-size:20px;color:#f0f0f0;transform-origin:13.90px 0;">3us</div><div id="f68" class="t" style="left:893.10px;top:499.25px;font-family:'Liberation Serif',serif;font-size:20px;color:#f0f0f0;transform-origin:13.90px 0;">8us</div><div id="f69" class="t" style="left:960.00px;top:499.25px;font-family:'Liberation Serif',serif;font-size:20px;color:#f0f0f0;transform-origin:5.00px 0;">2</div><div id="f70" class="t" style="left:1007.10px;top:499.25px;font-family:'Liberation Serif',serif;font-size:20px;color:#f0f0f0;transform-origin:13.90px 0;">8us</div><div id="f71" class="t" style="left:1074.00px;top:499.25px;font-family:'Liberation Serif',serif;font-size:20px;color:#f0f0f0;transform-origin:5.00px 0;">2</div><div id="f72" class="t" style="left:1120.10px;top:499.25px;font-family:'Liberation Serif',serif;font-size:20px;color:#f0f0f0;transform-origin:13.90px 0;">8us</div><div id="f73" class="t" style="left:1183.10px;top:499.25px;font-family:'Liberation Serif',serif;font-size:20px;color:#f0f0f0;transform-origin:13.90px 0;">3us</div><div id="f74" class="t" style="left:1239.10px;top:499.25px;font-family:'Liberation Serif',serif;font-size:20px;color:#f0f0f0;transform-origin:13.90px 0;">7us</div><div id="f75" class="t" style="left:1296.10px;top:499.25px;font-family:'Liberation Serif',serif;font-size:20px;color:#f0f0f0;transform-origin:13.90px 0;">3us</div><div id="f76" class="t" style="left:1352.10px;top:499.25px;font-family:'Liberation Serif',serif;font-size:20px;color:#f0f0f0;transform-origin:13.90px 0;">7us</div><div id="f77" class="t" style="left:1409.10px;top:499.25px;font-family:'Liberation Serif',serif;font-size:20px;color:#f0f0f0;transform-origin:13.90px 0;">3us</div><div id="f78" class="t" style="left:1465.10px;top:499.25px;font-family:'Liberation Serif',serif;font-size:20px;color:#f0f0f0;transform-origin:13.90px 0;">7us</div><div id="f79" class="t" style="left:1523.10px;top:499.25px;font-family:'Liberation Serif',serif;font-size:20px;color:#f0f0f0;transform-origin:13.90px 0;">3us</div><div id="f80" class="t" style="left:1586.10px;top:499.25px;font-family:'Liberation Serif',serif;font-size:20px;color:#f0f0f0;transform-origin:13.90px 0;">8us</div><div id="f81" class="t" style="left:1659.10px;top:499.25px;font-family:'Liberation Serif',serif;font-size:20px;color:#f0f0f0;transform-origin:13.90px 0;">5us</div><div style="left:1721px;top:237px;width:18px;height:298px;background:#222"></div><svg style="left:1725px;top:243px" width="10" height="8"><path d="M1 7L5 1L9 7z" fill="#fff"/></svg><div style="left:1724px;top:338px;width:12px;height:2px;background:#fff"></div><div style="left:1724px;top:342px;width:12px;height:2px;background:#fff"></div><div style="left:1724px;top:346px;width:12px;height:2px;background:#fff"></div><div style="left:1721px;top:427px;width:18px;height:87px;background:#888"></div><svg style="left:1725px;top:520px" width="10" height="8"><path d="M1 1L5 7L9 1z" fill="#fff"/></svg><div style="left:1739px;top:188px;width:6px;height:367px;background:#000"></div><div style="left:1739px;top:460px;width:5px;height:72px;background:#888"></div><div style="left:1739px;top:555px;width:6px;height:325px;background:#000"></div><svg style="left:1739px;top:490px" width="6" height="12"><path d="M1 1L5 6L1 11z" fill="#fff"/></svg><div style="left:617px;top:535px;width:1122px;height:20px;background:#808080"></div><div style="left:617px;top:535px;width:21px;height:20px;background:#000"></div><svg style="left:623px;top:540px" width="8" height="10"><path d="M6 1L1 5L6 9z" fill="#fff"/></svg><div style="left:919px;top:535px;width:9px;height:20px;background:#1a1a1a"></div><div style="left:1700px;top:535px;width:21px;height:20px;background:#000"></div><svg style="left:1708px;top:540px" width="8" height="10"><path d="M1 1L6 5L1 9z" fill="#fff"/></svg><div style="left:310px;top:558px;width:1429px;height:23px;background:#3e3e3e"></div><div style="left:310px;top:581px;width:1429px;height:8px;background:#333"></div><svg style="left:390px;top:565px" width="94" height="24"><path d="M0 24V9L8 1Q9 0 11 0H94V24z" fill="#cccccc"/></svg><div id="f82" class="t" style="left:327.00px;top:570.30px;font-family:'Liberation Sans',sans-serif;font-size:15px;color:#fff;transform-origin:0 0;transform:scaleX(1.0000);">導航器</div><div id="f83" class="t" style="left:404.00px;top:570.30px;font-family:'Liberation Sans',sans-serif;font-size:15px;color:#1a7aff;font-weight:bold;transform-origin:0 0;transform:scaleX(1.0500);">封包列表</div><div id="f84" class="t" style="left:499.00px;top:570.30px;font-family:'Liberation Sans',sans-serif;font-size:15px;color:#fff;transform-origin:0 0;transform:scaleX(0.9500);">資料統計</div><div id="f85" class="t" style="left:593.00px;top:570.30px;font-family:'Liberation Sans',sans-serif;font-size:15px;color:#fff;transform-origin:0 0;transform:scaleX(0.9600);">記憶體分析</div><div style="left:579px;top:567px;width:1px;height:19px;background:#6ab0f0"></div><div style="left:690px;top:567px;width:1px;height:19px;background:#6ab0f0"></div><div id="f86" class="t" style="left:1683.00px;top:567.00px;font-family:'Liberation Sans',sans-serif;font-size:13px;color:#5ab0e0;transform-origin:0 0;">?</div><div style="left:1700px;top:573px;width:10px;height:2px;background:#5ab0e0"></div><svg style="left:1716px;top:566px" width="12" height="12"><path d="M1 1L11 11M11 1L1 11" stroke="#5ab0e0" stroke-width="1.5"/></svg><div style="left:310px;top:589px;width:1429px;height:36px;background:#cccccc"></div><svg style="left:322px;top:593px" width="22" height="22"><path d="M2.5 2.5L11 11" stroke="#333" stroke-width="2.5" stroke-linecap="round"/><path d="M11.5 11.5L17.5 17.5" stroke="#1a6ee8" stroke-width="5" stroke-linecap="round"/><path d="M3.5 17.5L14 7" stroke="#333" stroke-width="4" stroke-linecap="round"/><path d="M12 8A5 5 0 0 1 17 1L16 5L19 6L21 4A5 5 0 0 1 14 10z" fill="#333"/><circle cx="3.5" cy="17.5" r="1.8" fill="#1a7aff"/></svg><svg style="left:361px;top:594px" width="22" height="22"><path d="M17 9C16 4 10 2 7 5" stroke="#1a7aff" stroke-width="3.5" fill="none"/><path d="M3 1L9 2L5 8z" fill="#1a7aff"/><path d="M5 11C6 16 12 18 15 15" stroke="#333" stroke-width="3.5" fill="none"/><path d="M18 19L12 18L17 12z" fill="#333"/></svg><svg style="left:397px;top:592px" width="24" height="22"><path d="M12 1L19 8H15V14H9V8H5z" fill="#1a7aff"/><path d="M2 12V19H22V12" stroke="#333" stroke-width="3" fill="none"/></svg><svg style="left:436px;top:592px" width="26" height="24"><path d="M2 6H7L17 18H21" stroke="#1a7aff" stroke-width="3.5" fill="none"/><path d="M20 13L25 18L20 23z" fill="#1a7aff"/><path d="M2 18H7L17 6H21" stroke="#333" stroke-width="3.5" fill="none"/><path d="M20 1L25 6L20 11z" fill="#333"/></svg><div style="left:311px;top:624px;width:1407px;height:256px;background:#fff"></div><div style="left:311px;top:624px;width:7px;height:256px;background:linear-gradient(90deg,#aaa,#eee 40%,#bbb)"></div><div style="left:311px;top:624px;width:1407px;height:2px;background:#eee"></div><div style="left:1718px;top:624px;width:21px;height:256px;background:#d0d0d0"></div><div style="left:1719px;top:625px;width:16px;height:254px;background:#999"></div><div style="left:1719px;top:625px;width:16px;height:22px;background:#222"></div><svg style="left:1721px;top:629px" width="12" height="8"><path d="M1 7L6 2L11 7z" fill="#ddd"/></svg><div style="left:1719px;top:857px;width:16px;height:22px;background:#222"></div><svg style="left:1721px;top:865px" width="12" height="8"><path d="M1 1L6 6L11 1z" fill="#ddd"/></svg><div style="left:318px;top:626px;width:291px;height:44px;background:#000"></div><div style="left:319px;top:627px;width:87px;height:20px;background:#333399"></div><div id="f87" class="t" style="left:338.72px;top:628.69px;font-family:'Liberation Sans',sans-serif;font-size:17.5px;color:#fff;transform-origin:23.78px 0;transform:scaleX(1.0000);">封包 <span style='font-size:12px'>#</span></div><div style="left:319px;top:648px;width:87px;height:21px;background:#fff"></div><div id="f88" class="t" style="left:358.46px;top:652.23px;font-family:'Liberation Sans',sans-serif;font-size:14.5px;color:#111;transform-origin:4.04px 0;transform:scaleX(1.0700);">1</div><div style="left:407px;top:627px;width:100px;height:20px;background:#333399"></div><div id="f89" class="t" style="left:439.00px;top:628.69px;font-family:'Liberation Sans',sans-serif;font-size:17.5px;color:#fff;transform-origin:18.00px 0;transform:scaleX(1.0000);">名稱</div><div style="left:407px;top:648px;width:100px;height:21px;background:#fff"></div><div id="f90" class="t" style="left:421.95px;top:652.23px;font-family:'Liberation Sans',sans-serif;font-size:14.5px;color:#111;transform-origin:35.05px 0;transform:scaleX(1.0700);">BUS0(I2C)</div><div style="left:508px;top:627px;width:100px;height:20px;background:#333399"></div><div id="f91" class="t" style="left:531.00px;top:628.69px;font-family:'Liberation Sans',sans-serif;font-size:17.5px;color:#fff;transform-origin:27.00px 0;transform:scaleX(1.0000);">起始點</div><div style="left:508px;top:648px;width:100px;height:21px;background:#fff"></div><div id="f92" class="t" style="left:522.12px;top:652.23px;font-family:'Liberation Sans',sans-serif;font-size:14.5px;color:#111;transform-origin:35.88px 0;transform:scaleX(1.0700);">131.183ms</div><div style="left:611px;top:626px;width:1065px;height:44px;background:#000"></div><div style="left:612px;top:627px;width:79px;height:20px;background:#ff6633"></div><div id="f93" class="t" style="left:624.90px;top:630.23px;font-family:'Liberation Sans',sans-serif;font-size:14.5px;color:#fff;transform-origin:26.60px 0;transform:scaleX(1.0700);">Address</div><div style="left:612px;top:648px;width:79px;height:21px;background:#fff"></div><div id="f94" class="t" style="left:633.76px;top:652.23px;font-family:'Liberation Sans',sans-serif;font-size:14.5px;color:#111;transform-origin:17.74px 0;transform:scaleX(1.0700);">0X6E</div><div style="left:692px;top:627px;width:58px;height:20px;background:#3366ff"></div><div id="f95" class="t" style="left:703.66px;top:630.23px;font-family:'Liberation Sans',sans-serif;font-size:14.5px;color:#fff;transform-origin:17.34px 0;transform:scaleX(1.0700);">Read</div><div style="left:692px;top:648px;width:58px;height:21px;background:#fff"></div><div id="f96" class="t" style="left:703.66px;top:652.23px;font-family:'Liberation Sans',sans-serif;font-size:14.5px;color:#111;transform-origin:17.34px 0;transform:scaleX(1.0700);">Read</div><div style="left:751px;top:627px;width:72px;height:20px;background:#ff0099"></div><div id="f97" class="t" style="left:764.84px;top:630.23px;font-family:'Liberation Sans',sans-serif;font-size:14.5px;color:#fff;transform-origin:22.16px 0;transform:scaleX(1.0700);">A-ACK</div><div style="left:751px;top:648px;width:72px;height:21px;background:#fff"></div><div id="f98" class="t" style="left:764.84px;top:652.23px;font-family:'Liberation Sans',sans-serif;font-size:14.5px;color:#111;transform-origin:22.16px 0;transform:scaleX(1.0700);">A-ACK</div><div style="left:824px;top:627px;width:58px;height:20px;background:#33cc33"></div><div id="f99" class="t" style="left:837.68px;top:630.23px;font-family:'Liberation Sans',sans-serif;font-size:14.5px;color:#fff;transform-origin:15.32px 0;transform:scaleX(1.0700);">Data</div><div style="left:824px;top:648px;width:58px;height:21px;background:#fff"></div><div id="f100" class="t" style="left:836.06px;top:652.23px;font-family:'Liberation Sans',sans-serif;font-size:14.5px;color:#111;transform-origin:16.94px 0;transform:scaleX(1.0700);">0X25</div><div style="left:883px;top:627px;width:72px;height:20px;background:#99cc99"></div><div id="f101" class="t" style="left:896.44px;top:630.23px;font-family:'Liberation Sans',sans-serif;font-size:14.5px;color:#eef4ee;transform-origin:22.56px 0;transform:scaleX(1.0700);">D-ACK</div><div style="left:883px;top:648px;width:72px;height:21px;background:#fff"></div><div id="f102" class="t" style="left:896.44px;top:652.23px;font-family:'Liberation Sans',sans-serif;font-size:14.5px;color:#111;transform-origin:22.56px 0;transform:scaleX(1.0700);">D-ACK</div><div style="left:956px;top:627px;width:59px;height:20px;background:#33cc33"></div><div id="f103" class="t" style="left:970.18px;top:630.23px;font-family:'Liberation Sans',sans-serif;font-size:14.5px;color:#fff;transform-origin:15.32px 0;transform:scaleX(1.0700);">Data</div><div style="left:956px;top:648px;width:59px;height:21px;background:#fff"></div><div id="f104" class="t" style="left:968.56px;top:652.23px;font-family:'Liberation Sans',sans-serif;font-size:14.5px;color:#111;transform-origin:16.94px 0;transform:scaleX(1.0700);">0X36</div><div style="left:1016px;top:627px;width:72px;height:20px;background:#99cc99"></div><div id="f105" class="t" style="left:1029.44px;top:630.23px;font-family:'Liberation Sans',sans-serif;font-size:14.5px;color:#eef4ee;transform-origin:22.56px 0;transform:scaleX(1.0700);">D-ACK</div><div style="left:1016px;top:648px;width:72px;height:21px;background:#fff"></div><div id="f106" class="t" style="left:1029.44px;top:652.23px;font-family:'Liberation Sans',sans-serif;font-size:14.5px;color:#111;transform-origin:22.56px 0;transform:scaleX(1.0700);">D-ACK</div><div style="left:1089px;top:627px;width:58px;height:20px;background:#33cc33"></div><div id="f107" class="t" style="left:1102.68px;top:630.23px;font-family:'Liberation Sans',sans-serif;font-size:14.5px;color:#fff;transform-origin:15.32px 0;transform:scaleX(1.0700);">Data</div><div style="left:1089px;top:648px;width:58px;height:21px;background:#fff"></div><div id="f108" class="t" style="left:1101.06px;top:652.23px;font-family:'Liberation Sans',sans-serif;font-size:14.5px;color:#111;transform-origin:16.94px 0;transform:scaleX(1.0700);">0X47</div><div style="left:1148px;top:627px;width:72px;height:20px;background:#99cc99"></div><div id="f109" class="t" style="left:1161.44px;top:630.23px;font-family:'Liberation Sans',sans-serif;font-size:14.5px;color:#eef4ee;transform-origin:22.56px 0;transform:scaleX(1.0700);">D-ACK</div><div style="left:1148px;top:648px;width:72px;height:21px;background:#fff"></div><div id="f110" class="t" style="left:1161.44px;top:652.23px;font-family:'Liberation Sans',sans-serif;font-size:14.5px;color:#111;transform-origin:22.56px 0;transform:scaleX(1.0700);">D-ACK</div><div style="left:1221px;top:627px;width:58px;height:20px;background:#33cc33"></div><div id="f111" class="t" style="left:1234.68px;top:630.23px;font-family:'Liberation Sans',sans-serif;font-size:14.5px;color:#fff;transform-origin:15.32px 0;transform:scaleX(1.0700);">Data</div><div style="left:1221px;top:648px;width:58px;height:21px;background:#fff"></div><div id="f112" class="t" style="left:1233.06px;top:652.23px;font-family:'Liberation Sans',sans-serif;font-size:14.5px;color:#111;transform-origin:16.94px 0;transform:scaleX(1.0700);">0X58</div><div style="left:1280px;top:627px;width:72px;height:20px;background:#99cc99"></div><div id="f113" class="t" style="left:1293.44px;top:630.23px;font-family:'Liberation Sans',sans-serif;font-size:14.5px;color:#eef4ee;transform-origin:22.56px 0;transform:scaleX(1.0700);">D-ACK</div><div style="left:1280px;top:648px;width:72px;height:21px;background:#fff"></div><div id="f114" class="t" style="left:1293.44px;top:652.23px;font-family:'Liberation Sans',sans-serif;font-size:14.5px;color:#111;transform-origin:22.56px 0;transform:scaleX(1.0700);">D-ACK</div><div style="left:1353px;top:627px;width:58px;height:20px;background:#33cc33"></div><div id="f115" class="t" style="left:1366.68px;top:630.23px;font-family:'Liberation Sans',sans-serif;font-size:14.5px;color:#fff;transform-origin:15.32px 0;transform:scaleX(1.0700);">Data</div><div style="left:1353px;top:648px;width:58px;height:21px;background:#fff"></div><div id="f116" class="t" style="left:1365.06px;top:652.23px;font-family:'Liberation Sans',sans-serif;font-size:14.5px;color:#111;transform-origin:16.94px 0;transform:scaleX(1.0700);">0X69</div><div style="left:1412px;top:627px;width:72px;height:20px;background:#99cc99"></div><div id="f117" class="t" style="left:1425.44px;top:630.23px;font-family:'Liberation Sans',sans-serif;font-size:14.5px;color:#eef4ee;transform-origin:22.56px 0;transform:scaleX(1.0700);">D-ACK</div><div style="left:1412px;top:648px;width:72px;height:21px;background:#fff"></div><div id="f118" class="t" style="left:1425.44px;top:652.23px;font-family:'Liberation Sans',sans-serif;font-size:14.5px;color:#111;transform-origin:22.56px 0;transform:scaleX(1.0700);">D-ACK</div><div style="left:1485px;top:627px;width:58px;height:20px;background:#33cc33"></div><div id="f119" class="t" style="left:1498.68px;top:630.23px;font-family:'Liberation Sans',sans-serif;font-size:14.5px;color:#fff;transform-origin:15.32px 0;transform:scaleX(1.0700);">Data</div><div style="left:1485px;top:648px;width:58px;height:21px;background:#fff"></div><div id="f120" class="t" style="left:1496.26px;top:652.23px;font-family:'Liberation Sans',sans-serif;font-size:14.5px;color:#111;transform-origin:17.74px 0;transform:scaleX(1.0700);">0X7A</div><div style="left:1544px;top:627px;width:72px;height:20px;background:#99cc99"></div><div id="f121" class="t" style="left:1557.44px;top:630.23px;font-family:'Liberation Sans',sans-serif;font-size:14.5px;color:#eef4ee;transform-origin:22.56px 0;transform:scaleX(1.0700);">D-ACK</div><div style="left:1544px;top:648px;width:72px;height:21px;background:#fff"></div><div id="f122" class="t" style="left:1557.44px;top:652.23px;font-family:'Liberation Sans',sans-serif;font-size:14.5px;color:#111;transform-origin:22.56px 0;transform:scaleX(1.0700);">D-ACK</div><div style="left:1617px;top:627px;width:58px;height:20px;background:#33cc33"></div><div id="f123" class="t" style="left:1630.68px;top:630.23px;font-family:'Liberation Sans',sans-serif;font-size:14.5px;color:#fff;transform-origin:15.32px 0;transform:scaleX(1.0700);">Data</div><div style="left:1617px;top:648px;width:58px;height:21px;background:#fff"></div><div id="f124" class="t" style="left:1628.26px;top:652.23px;font-family:'Liberation Sans',sans-serif;font-size:14.5px;color:#111;transform-origin:17.74px 0;transform:scaleX(1.0700);">0X8B</div><div style="left:374px;top:673px;width:1132px;height:44px;background:#000"></div><div style="left:375px;top:674px;width:72px;height:20px;background:#99cc99"></div><div id="f125" class="t" style="left:388.44px;top:677.23px;font-family:'Liberation Sans',sans-serif;font-size:14.5px;color:#eef4ee;transform-origin:22.56px 0;transform:scaleX(1.0700);">D-ACK</div><div style="left:375px;top:695px;width:72px;height:21px;background:#fff"></div><div id="f126" class="t" style="left:388.44px;top:699.23px;font-family:'Liberation Sans',sans-serif;font-size:14.5px;color:#111;transform-origin:22.56px 0;transform:scaleX(1.0700);">D-ACK</div><div style="left:448px;top:674px;width:58px;height:20px;background:#33cc33"></div><div id="f127" class="t" style="left:461.68px;top:677.23px;font-family:'Liberation Sans',sans-serif;font-size:14.5px;color:#fff;transform-origin:15.32px 0;transform:scaleX(1.0700);">Data</div><div style="left:448px;top:695px;width:58px;height:21px;background:#fff"></div><div id="f128" class="t" style="left:458.86px;top:699.23px;font-family:'Liberation Sans',sans-serif;font-size:14.5px;color:#111;transform-origin:18.14px 0;transform:scaleX(1.0700);">0X9C</div><div style="left:507px;top:674px;width:72px;height:20px;background:#99cc99"></div><div id="f129" class="t" style="left:520.44px;top:677.23px;font-family:'Liberation Sans',sans-serif;font-size:14.5px;color:#eef4ee;transform-origin:22.56px 0;transform:scaleX(1.0700);">D-ACK</div><div style="left:507px;top:695px;width:72px;height:21px;background:#fff"></div><div id="f130" class="t" style="left:520.44px;top:699.23px;font-family:'Liberation Sans',sans-serif;font-size:14.5px;color:#111;transform-origin:22.56px 0;transform:scaleX(1.0700);">D-ACK</div><div style="left:580px;top:674px;width:58px;height:20px;background:#33cc33"></div><div id="f131" class="t" style="left:593.68px;top:677.23px;font-family:'Liberation Sans',sans-serif;font-size:14.5px;color:#fff;transform-origin:15.32px 0;transform:scaleX(1.0700);">Data</div><div style="left:580px;top:695px;width:58px;height:21px;background:#fff"></div><div id="f132" class="t" style="left:590.05px;top:699.23px;font-family:'Liberation Sans',sans-serif;font-size:14.5px;color:#111;transform-origin:18.95px 0;transform:scaleX(1.0700);">0XAD</div><div style="left:639px;top:674px;width:73px;height:20px;background:#99cc99"></div><div id="f133" class="t" style="left:652.94px;top:677.23px;font-family:'Liberation Sans',sans-serif;font-size:14.5px;color:#eef4ee;transform-origin:22.56px 0;transform:scaleX(1.0700);">D-ACK</div><div style="left:639px;top:695px;width:73px;height:21px;background:#fff"></div><div id="f134" class="t" style="left:652.94px;top:699.23px;font-family:'Liberation Sans',sans-serif;font-size:14.5px;color:#111;transform-origin:22.56px 0;transform:scaleX(1.0700);">D-ACK</div><div style="left:713px;top:674px;width:58px;height:20px;background:#33cc33"></div><div id="f135" class="t" style="left:726.68px;top:677.23px;font-family:'Liberation Sans',sans-serif;font-size:14.5px;color:#fff;transform-origin:15.32px 0;transform:scaleX(1.0700);">Data</div><div style="left:713px;top:695px;width:58px;height:21px;background:#fff"></div><div id="f136" class="t" style="left:723.45px;top:699.23px;font-family:'Liberation Sans',sans-serif;font-size:14.5px;color:#111;transform-origin:18.55px 0;transform:scaleX(1.0700);">0XBE</div><div style="left:772px;top:674px;width:72px;height:20px;background:#99cc99"></div><div id="f137" class="t" style="left:785.44px;top:677.23px;font-family:'Liberation Sans',sans-serif;font-size:14.5px;color:#eef4ee;transform-origin:22.56px 0;transform:scaleX(1.0700);">D-ACK</div><div style="left:772px;top:695px;width:72px;height:21px;background:#fff"></div><div id="f138" class="t" style="left:785.44px;top:699.23px;font-family:'Liberation Sans',sans-serif;font-size:14.5px;color:#111;transform-origin:22.56px 0;transform:scaleX(1.0700);">D-ACK</div><div style="left:845px;top:674px;width:58px;height:20px;background:#33cc33"></div><div id="f139" class="t" style="left:858.68px;top:677.23px;font-family:'Liberation Sans',sans-serif;font-size:14.5px;color:#fff;transform-origin:15.32px 0;transform:scaleX(1.0700);">Data</div><div style="left:845px;top:695px;width:58px;height:21px;background:#fff"></div><div id="f140" class="t" style="left:855.46px;top:699.23px;font-family:'Liberation Sans',sans-serif;font-size:14.5px;color:#111;transform-origin:18.54px 0;transform:scaleX(1.0700);">0XCF</div><div style="left:904px;top:674px;width:72px;height:20px;background:#99cc99"></div><div id="f141" class="t" style="left:917.44px;top:677.23px;font-family:'Liberation Sans',sans-serif;font-size:14.5px;color:#eef4ee;transform-origin:22.56px 0;transform:scaleX(1.0700);">D-ACK</div><div style="left:904px;top:695px;width:72px;height:21px;background:#fff"></div><div id="f142" class="t" style="left:917.44px;top:699.23px;font-family:'Liberation Sans',sans-serif;font-size:14.5px;color:#111;transform-origin:22.56px 0;transform:scaleX(1.0700);">D-ACK</div><div style="left:977px;top:674px;width:58px;height:20px;background:#33cc33"></div><div id="f143" class="t" style="left:990.68px;top:677.23px;font-family:'Liberation Sans',sans-serif;font-size:14.5px;color:#fff;transform-origin:15.32px 0;transform:scaleX(1.0700);">Data</div><div style="left:977px;top:695px;width:58px;height:21px;background:#fff"></div><div id="f144" class="t" style="left:988.26px;top:699.23px;font-family:'Liberation Sans',sans-serif;font-size:14.5px;color:#111;transform-origin:17.74px 0;transform:scaleX(1.0700);">0XE0</div><div style="left:1036px;top:674px;width:72px;height:20px;background:#99cc99"></div><div id="f145" class="t" style="left:1049.44px;top:677.23px;font-family:'Liberation Sans',sans-serif;font-size:14.5px;color:#eef4ee;transform-origin:22.56px 0;transform:scaleX(1.0700);">D-ACK</div><div style="left:1036px;top:695px;width:72px;height:21px;background:#fff"></div><div id="f146" class="t" style="left:1049.44px;top:699.23px;font-family:'Liberation Sans',sans-serif;font-size:14.5px;color:#111;transform-origin:22.56px 0;transform:scaleX(1.0700);">D-ACK</div><div style="left:1109px;top:674px;width:58px;height:20px;background:#33cc33"></div><div id="f147" class="t" style="left:1122.68px;top:677.23px;font-family:'Liberation Sans',sans-serif;font-size:14.5px;color:#fff;transform-origin:15.32px 0;transform:scaleX(1.0700);">Data</div><div style="left:1109px;top:695px;width:58px;height:21px;background:#fff"></div><div id="f148" class="t" style="left:1120.66px;top:699.23px;font-family:'Liberation Sans',sans-serif;font-size:14.5px;color:#111;transform-origin:17.34px 0;transform:scaleX(1.0700);">0XF1</div><div style="left:1168px;top:674px;width:72px;height:20px;background:#99cc99"></div><div id="f149" class="t" style="left:1181.44px;top:677.23px;font-family:'Liberation Sans',sans-serif;font-size:14.5px;color:#eef4ee;transform-origin:22.56px 0;transform:scaleX(1.0700);">D-ACK</div><div style="left:1168px;top:695px;width:72px;height:21px;background:#fff"></div><div id="f150" class="t" style="left:1181.44px;top:699.23px;font-family:'Liberation Sans',sans-serif;font-size:14.5px;color:#111;transform-origin:22.56px 0;transform:scaleX(1.0700);">D-ACK</div><div style="left:1241px;top:674px;width:58px;height:20px;background:#33cc33"></div><div id="f151" class="t" style="left:1254.68px;top:677.23px;font-family:'Liberation Sans',sans-serif;font-size:14.5px;color:#fff;transform-origin:15.32px 0;transform:scaleX(1.0700);">Data</div><div style="left:1241px;top:695px;width:58px;height:21px;background:#fff"></div><div id="f152" class="t" style="left:1253.06px;top:699.23px;font-family:'Liberation Sans',sans-serif;font-size:14.5px;color:#111;transform-origin:16.94px 0;transform:scaleX(1.0700);">0X02</div><div style="left:1300px;top:674px;width:72px;height:20px;background:#99cc99"></div><div id="f153" class="t" style="left:1313.44px;top:677.23px;font-family:'Liberation Sans',sans-serif;font-size:14.5px;color:#eef4ee;transform-origin:22.56px 0;transform:scaleX(1.0700);">D-ACK</div><div style="left:1300px;top:695px;width:72px;height:21px;background:#fff"></div><div id="f154" class="t" style="left:1313.44px;top:699.23px;font-family:'Liberation Sans',sans-serif;font-size:14.5px;color:#111;transform-origin:22.56px 0;transform:scaleX(1.0700);">D-ACK</div><div style="left:1373px;top:674px;width:59px;height:20px;background:#33cc33"></div><div id="f155" class="t" style="left:1387.18px;top:677.23px;font-family:'Liberation Sans',sans-serif;font-size:14.5px;color:#fff;transform-origin:15.32px 0;transform:scaleX(1.0700);">Data</div><div style="left:1373px;top:695px;width:59px;height:21px;background:#fff"></div><div id="f156" class="t" style="left:1385.56px;top:699.23px;font-family:'Liberation Sans',sans-serif;font-size:14.5px;color:#111;transform-origin:16.94px 0;transform:scaleX(1.0700);">0X13</div><div style="left:1433px;top:674px;width:72px;height:20px;background:#99cc99"></div><div id="f157" class="t" style="left:1446.44px;top:677.23px;font-family:'Liberation Sans',sans-serif;font-size:14.5px;color:#eef4ee;transform-origin:22.56px 0;transform:scaleX(1.0700);">D-ACK</div><div style="left:1433px;top:695px;width:72px;height:21px;background:#fff"></div><div id="f158" class="t" style="left:1446.44px;top:699.23px;font-family:'Liberation Sans',sans-serif;font-size:14.5px;color:#111;transform-origin:22.56px 0;transform:scaleX(1.0700);">D-ACK</div><div style="left:318px;top:719px;width:291px;height:44px;background:#000"></div><div style="left:319px;top:720px;width:87px;height:20px;background:#333399"></div><div id="f159" class="t" style="left:338.72px;top:721.69px;font-family:'Liberation Sans',sans-serif;font-size:17.5px;color:#fff;transform-origin:23.78px 0;transform:scaleX(1.0000);">封包 <span style='font-size:12px'>#</span></div><div style="left:319px;top:741px;width:87px;height:21px;background:#fff"></div><div id="f160" class="t" style="left:358.46px;top:745.23px;font-family:'Liberation Sans',sans-serif;font-size:14.5px;color:#111;transform-origin:4.04px 0;transform:scaleX(1.0700);">2</div><div style="left:407px;top:720px;width:100px;height:20px;background:#333399"></div><div id="f161" class="t" style="left:439.00px;top:721.69px;font-family:'Liberation Sans',sans-serif;font-size:17.5px;color:#fff;transform-origin:18.00px 0;transform:scaleX(1.0000);">名稱</div><div style="left:407px;top:741px;width:100px;height:21px;background:#fff"></div><div id="f162" class="t" style="left:421.95px;top:745.23px;font-family:'Liberation Sans',sans-serif;font-size:14.5px;color:#111;transform-origin:35.05px 0;transform:scaleX(1.0700);">BUS0(I2C)</div><div style="left:508px;top:720px;width:100px;height:20px;background:#333399"></div><div id="f163" class="t" style="left:531.00px;top:721.69px;font-family:'Liberation Sans',sans-serif;font-size:17.5px;color:#fff;transform-origin:27.00px 0;transform:scaleX(1.0000);">起始點</div><div style="left:508px;top:741px;width:100px;height:21px;background:#fff"></div><div id="f164" class="t" style="left:522.12px;top:745.23px;font-family:'Liberation Sans',sans-serif;font-size:14.5px;color:#111;transform-origin:35.88px 0;transform:scaleX(1.0700);">132.884ms</div><div style="left:611px;top:719px;width:1065px;height:44px;background:#000"></div><div style="left:612px;top:720px;width:79px;height:20px;background:#ff6633"></div><div id="f165" class="t" style="left:624.90px;top:723.23px;font-family:'Liberation Sans',sans-serif;font-size:14.5px;color:#fff;transform-origin:26.60px 0;transform:scaleX(1.0700);">Address</div><div style="left:612px;top:741px;width:79px;height:21px;background:#fff"></div><div id="f166" class="t" style="left:633.36px;top:745.23px;font-family:'Liberation Sans',sans-serif;font-size:14.5px;color:#111;transform-origin:18.14px 0;transform:scaleX(1.0700);">0X5D</div><div style="left:692px;top:720px;width:58px;height:20px;background:#3366ff"></div><div id="f167" class="t" style="left:703.66px;top:723.23px;font-family:'Liberation Sans',sans-serif;font-size:14.5px;color:#fff;transform-origin:17.34px 0;transform:scaleX(1.0700);">Read</div><div style="left:692px;top:741px;width:58px;height:21px;background:#fff"></div><div id="f168" class="t" style="left:703.66px;top:745.23px;font-family:'Liberation Sans',sans-serif;font-size:14.5px;color:#111;transform-origin:17.34px 0;transform:scaleX(1.0700);">Read</div><div style="left:751px;top:720px;width:72px;height:20px;background:#ff0099"></div><div id="f169" class="t" style="left:764.84px;top:723.23px;font-family:'Liberation Sans',sans-serif;font-size:14.5px;color:#fff;transform-origin:22.16px 0;transform:scaleX(1.0700);">A-ACK</div><div style="left:751px;top:741px;width:72px;height:21px;background:#fff"></div><div id="f170" class="t" style="left:764.84px;top:745.23px;font-family:'Liberation Sans',sans-serif;font-size:14.5px;color:#111;transform-origin:22.16px 0;transform:scaleX(1.0700);">A-ACK</div><div style="left:824px;top:720px;width:58px;height:20px;background:#33cc33"></div><div id="f171" class="t" style="left:837.68px;top:723.23px;font-family:'Liberation Sans',sans-serif;font-size:14.5px;color:#fff;transform-origin:15.32px 0;transform:scaleX(1.0700);">Data</div><div style="left:824px;top:741px;width:58px;height:21px;background:#fff"></div><div id="f172" class="t" style="left:836.06px;top:745.23px;font-family:'Liberation Sans',sans-serif;font-size:14.5px;color:#111;transform-origin:16.94px 0;transform:scaleX(1.0700);">0X49</div><div style="left:883px;top:720px;width:72px;height:20px;background:#99cc99"></div><div id="f173" class="t" style="left:896.44px;top:723.23px;font-family:'Liberation Sans',sans-serif;font-size:14.5px;color:#eef4ee;transform-origin:22.56px 0;transform:scaleX(1.0700);">D-ACK</div><div style="left:883px;top:741px;width:72px;height:21px;background:#fff"></div><div id="f174" class="t" style="left:896.44px;top:745.23px;font-family:'Liberation Sans',sans-serif;font-size:14.5px;color:#111;transform-origin:22.56px 0;transform:scaleX(1.0700);">D-ACK</div><div style="left:956px;top:720px;width:59px;height:20px;background:#33cc33"></div><div id="f175" class="t" style="left:970.18px;top:723.23px;font-family:'Liberation Sans',sans-serif;font-size:14.5px;color:#fff;transform-origin:15.32px 0;transform:scaleX(1.0700);">Data</div><div style="left:956px;top:741px;width:59px;height:21px;background:#fff"></div><div id="f176" class="t" style="left:967.76px;top:745.23px;font-family:'Liberation Sans',sans-serif;font-size:14.5px;color:#111;transform-origin:17.74px 0;transform:scaleX(1.0700);">0X5A</div><div style="left:1016px;top:720px;width:72px;height:20px;background:#99cc99"></div><div id="f177" class="t" style="left:1029.44px;top:723.23px;font-family:'Liberation Sans',sans-serif;font-size:14.5px;color:#eef4ee;transform-origin:22.56px 0;transform:scaleX(1.0700);">D-ACK</div><div style="left:1016px;top:741px;width:72px;height:21px;background:#fff"></div><div id="f178" class="t" style="left:1029.44px;top:745.23px;font-family:'Liberation Sans',sans-serif;font-size:14.5px;color:#111;transform-origin:22.56px 0;transform:scaleX(1.0700);">D-ACK</div><div style="left:1089px;top:720px;width:58px;height:20px;background:#33cc33"></div><div id="f179" class="t" style="left:1102.68px;top:723.23px;font-family:'Liberation Sans',sans-serif;font-size:14.5px;color:#fff;transform-origin:15.32px 0;transform:scaleX(1.0700);">Data</div><div style="left:1089px;top:741px;width:58px;height:21px;background:#fff"></div><div id="f180" class="t" style="left:1100.26px;top:745.23px;font-family:'Liberation Sans',sans-serif;font-size:14.5px;color:#111;transform-origin:17.74px 0;transform:scaleX(1.0700);">0X6B</div><div style="left:1148px;top:720px;width:72px;height:20px;background:#99cc99"></div><div id="f181" class="t" style="left:1161.44px;top:723.23px;font-family:'Liberation Sans',sans-serif;font-size:14.5px;color:#eef4ee;transform-origin:22.56px 0;transform:scaleX(1.0700);">D-ACK</div><div style="left:1148px;top:741px;width:72px;height:21px;background:#fff"></div><div id="f182" class="t" style="left:1161.44px;top:745.23px;font-family:'Liberation Sans',sans-serif;font-size:14.5px;color:#111;transform-origin:22.56px 0;transform:scaleX(1.0700);">D-ACK</div><div style="left:1221px;top:720px;width:58px;height:20px;background:#33cc33"></div><div id="f183" class="t" style="left:1234.68px;top:723.23px;font-family:'Liberation Sans',sans-serif;font-size:14.5px;color:#fff;transform-origin:15.32px 0;transform:scaleX(1.0700);">Data</div><div style="left:1221px;top:741px;width:58px;height:21px;background:#fff"></div><div id="f184" class="t" style="left:1231.86px;top:745.23px;font-family:'Liberation Sans',sans-serif;font-size:14.5px;color:#111;transform-origin:18.14px 0;transform:scaleX(1.0700);">0X7C</div><div style="left:1280px;top:720px;width:72px;height:20px;background:#99cc99"></div><div id="f185" class="t" style="left:1293.44px;top:723.23px;font-family:'Liberation Sans',sans-serif;font-size:14.5px;color:#eef4ee;transform-origin:22.56px 0;transform:scaleX(1.0700);">D-ACK</div><div style="left:1280px;top:741px;width:72px;height:21px;background:#fff"></div><div id="f186" class="t" style="left:1293.44px;top:745.23px;font-family:'Liberation Sans',sans-serif;font-size:14.5px;color:#111;transform-origin:22.56px 0;transform:scaleX(1.0700);">D-ACK</div><div style="left:1353px;top:720px;width:58px;height:20px;background:#33cc33"></div><div id="f187" class="t" style="left:1366.68px;top:723.23px;font-family:'Liberation Sans',sans-serif;font-size:14.5px;color:#fff;transform-origin:15.32px 0;transform:scaleX(1.0700);">Data</div><div style="left:1353px;top:741px;width:58px;height:21px;background:#fff"></div><div id="f188" class="t" style="left:1363.86px;top:745.23px;font-family:'Liberation Sans',sans-serif;font-size:14.5px;color:#111;transform-origin:18.14px 0;transform:scaleX(1.0700);">0X8D</div><div style="left:1412px;top:720px;width:72px;height:20px;background:#99cc99"></div><div id="f189" class="t" style="left:1425.44px;top:723.23px;font-family:'Liberation Sans',sans-serif;font-size:14.5px;color:#eef4ee;transform-origin:22.56px 0;transform:scaleX(1.0700);">D-ACK</div><div style="left:1412px;top:741px;width:72px;height:21px;background:#fff"></div><div id="f190" class="t" style="left:1425.44px;top:745.23px;font-family:'Liberation Sans',sans-serif;font-size:14.5px;color:#111;transform-origin:22.56px 0;transform:scaleX(1.0700);">D-ACK</div><div style="left:1485px;top:720px;width:58px;height:20px;background:#33cc33"></div><div id="f191" class="t" style="left:1498.68px;top:723.23px;font-family:'Liberation Sans',sans-serif;font-size:14.5px;color:#fff;transform-origin:15.32px 0;transform:scaleX(1.0700);">Data</div><div style="left:1485px;top:741px;width:58px;height:21px;background:#fff"></div><div id="f192" class="t" style="left:1496.26px;top:745.23px;font-family:'Liberation Sans',sans-serif;font-size:14.5px;color:#111;transform-origin:17.74px 0;transform:scaleX(1.0700);">0X9E</div><div style="left:1544px;top:720px;width:72px;height:20px;background:#99cc99"></div><div id="f193" class="t" style="left:1557.44px;top:723.23px;font-family:'Liberation Sans',sans-serif;font-size:14.5px;color:#eef4ee;transform-origin:22.56px 0;transform:scaleX(1.0700);">D-ACK</div><div style="left:1544px;top:741px;width:72px;height:21px;background:#fff"></div><div id="f194" class="t" style="left:1557.44px;top:745.23px;font-family:'Liberation Sans',sans-serif;font-size:14.5px;color:#111;transform-origin:22.56px 0;transform:scaleX(1.0700);">D-ACK</div><div style="left:1617px;top:720px;width:58px;height:20px;background:#33cc33"></div><div id="f195" class="t" style="left:1630.68px;top:723.23px;font-family:'Liberation Sans',sans-serif;font-size:14.5px;color:#fff;transform-origin:15.32px 0;transform:scaleX(1.0700);">Data</div><div style="left:1617px;top:741px;width:58px;height:21px;background:#fff"></div><div id="f196" class="t" style="left:1627.87px;top:745.23px;font-family:'Liberation Sans',sans-serif;font-size:14.5px;color:#111;transform-origin:18.13px 0;transform:scaleX(1.0700);">0XAF</div><div style="left:374px;top:766px;width:471px;height:44px;background:#000"></div><div style="left:375px;top:767px;width:72px;height:20px;background:#99cc99"></div><div id="f197" class="t" style="left:388.44px;top:770.23px;font-family:'Liberation Sans',sans-serif;font-size:14.5px;color:#eef4ee;transform-origin:22.56px 0;transform:scaleX(1.0700);">D-ACK</div><div style="left:375px;top:788px;width:72px;height:21px;background:#fff"></div><div id="f198" class="t" style="left:388.44px;top:792.23px;font-family:'Liberation Sans',sans-serif;font-size:14.5px;color:#111;transform-origin:22.56px 0;transform:scaleX(1.0700);">D-ACK</div><div style="left:448px;top:767px;width:58px;height:20px;background:#33cc33"></div><div id="f199" class="t" style="left:461.68px;top:770.23px;font-family:'Liberation Sans',sans-serif;font-size:14.5px;color:#fff;transform-origin:15.32px 0;transform:scaleX(1.0700);">Data</div><div style="left:448px;top:788px;width:58px;height:21px;background:#fff"></div><div id="f200" class="t" style="left:458.86px;top:792.23px;font-family:'Liberation Sans',sans-serif;font-size:14.5px;color:#111;transform-origin:18.14px 0;transform:scaleX(1.0700);">0XC0</div><div style="left:507px;top:767px;width:72px;height:20px;background:#99cc99"></div><div id="f201" class="t" style="left:520.44px;top:770.23px;font-family:'Liberation Sans',sans-serif;font-size:14.5px;color:#eef4ee;transform-origin:22.56px 0;transform:scaleX(1.0700);">D-ACK</div><div style="left:507px;top:788px;width:72px;height:21px;background:#fff"></div><div id="f202" class="t" style="left:520.44px;top:792.23px;font-family:'Liberation Sans',sans-serif;font-size:14.5px;color:#111;transform-origin:22.56px 0;transform:scaleX(1.0700);">D-ACK</div><div style="left:580px;top:767px;width:58px;height:20px;background:#33cc33"></div><div id="f203" class="t" style="left:593.68px;top:770.23px;font-family:'Liberation Sans',sans-serif;font-size:14.5px;color:#fff;transform-origin:15.32px 0;transform:scaleX(1.0700);">Data</div><div style="left:580px;top:788px;width:58px;height:21px;background:#fff"></div><div id="f204" class="t" style="left:590.86px;top:792.23px;font-family:'Liberation Sans',sans-serif;font-size:14.5px;color:#111;transform-origin:18.14px 0;transform:scaleX(1.0700);">0XD1</div><div style="left:639px;top:767px;width:73px;height:20px;background:#99cc99"></div><div id="f205" class="t" style="left:652.94px;top:770.23px;font-family:'Liberation Sans',sans-serif;font-size:14.5px;color:#eef4ee;transform-origin:22.56px 0;transform:scaleX(1.0700);">D-ACK</div><div style="left:639px;top:788px;width:73px;height:21px;background:#fff"></div><div id="f206" class="t" style="left:652.94px;top:792.23px;font-family:'Liberation Sans',sans-serif;font-size:14.5px;color:#111;transform-origin:22.56px 0;transform:scaleX(1.0700);">D-ACK</div><div style="left:713px;top:767px;width:58px;height:20px;background:#33cc33"></div><div id="f207" class="t" style="left:726.68px;top:770.23px;font-family:'Liberation Sans',sans-serif;font-size:14.5px;color:#fff;transform-origin:15.32px 0;transform:scaleX(1.0700);">Data</div><div style="left:713px;top:788px;width:58px;height:21px;background:#fff"></div><div id="f208" class="t" style="left:724.26px;top:792.23px;font-family:'Liberation Sans',sans-serif;font-size:14.5px;color:#111;transform-origin:17.74px 0;transform:scaleX(1.0700);">0XE2</div><div style="left:772px;top:767px;width:72px;height:20px;background:#99cc99"></div><div id="f209" class="t" style="left:785.44px;top:770.23px;font-family:'Liberation Sans',sans-serif;font-size:14.5px;color:#eef4ee;transform-origin:22.56px 0;transform:scaleX(1.0700);">D-ACK</div><div style="left:772px;top:788px;width:72px;height:21px;background:#fff"></div><div id="f210" class="t" style="left:785.44px;top:792.23px;font-family:'Liberation Sans',sans-serif;font-size:14.5px;color:#111;transform-origin:22.56px 0;transform:scaleX(1.0700);">D-ACK</div><div style="left:318px;top:812px;width:291px;height:44px;background:#000"></div><div style="left:319px;top:813px;width:87px;height:20px;background:#333399"></div><div id="f211" class="t" style="left:338.72px;top:814.69px;font-family:'Liberation Sans',sans-serif;font-size:17.5px;color:#fff;transform-origin:23.78px 0;transform:scaleX(1.0000);">封包 <span style='font-size:12px'>#</span></div><div style="left:319px;top:834px;width:87px;height:21px;background:#fff"></div><div id="f212" class="t" style="left:358.46px;top:838.23px;font-family:'Liberation Sans',sans-serif;font-size:14.5px;color:#111;transform-origin:4.04px 0;transform:scaleX(1.0700);">3</div><div style="left:407px;top:813px;width:100px;height:20px;background:#333399"></div><div id="f213" class="t" style="left:439.00px;top:814.69px;font-family:'Liberation Sans',sans-serif;font-size:17.5px;color:#fff;transform-origin:18.00px 0;transform:scaleX(1.0000);">名稱</div><div style="left:407px;top:834px;width:100px;height:21px;background:#fff"></div><div id="f214" class="t" style="left:421.95px;top:838.23px;font-family:'Liberation Sans',sans-serif;font-size:14.5px;color:#111;transform-origin:35.05px 0;transform:scaleX(1.0700);">BUS0(I2C)</div><div style="left:508px;top:813px;width:100px;height:20px;background:#333399"></div><div id="f215" class="t" style="left:531.00px;top:814.69px;font-family:'Liberation Sans',sans-serif;font-size:17.5px;color:#fff;transform-origin:27.00px 0;transform:scaleX(1.0000);">起始點</div><div style="left:508px;top:834px;width:100px;height:21px;background:#fff"></div><div id="f216" class="t" style="left:522.12px;top:838.23px;font-family:'Liberation Sans',sans-serif;font-size:14.5px;color:#111;transform-origin:35.88px 0;transform:scaleX(1.0700);">134.132ms</div><div style="left:611px;top:812px;width:625px;height:44px;background:#000"></div><div style="left:612px;top:813px;width:79px;height:20px;background:#ff6633"></div><div id="f217" class="t" style="left:624.90px;top:816.23px;font-family:'Liberation Sans',sans-serif;font-size:14.5px;color:#fff;transform-origin:26.60px 0;transform:scaleX(1.0700);">Address</div><div style="left:612px;top:834px;width:79px;height:21px;background:#fff"></div><div id="f218" class="t" style="left:634.56px;top:838.23px;font-family:'Liberation Sans',sans-serif;font-size:14.5px;color:#111;transform-origin:16.94px 0;transform:scaleX(1.0700);">0X18</div><div style="left:692px;top:813px;width:73px;height:20px;background:#ff5252"></div><div id="f219" class="t" style="left:711.71px;top:816.23px;font-family:'Liberation Sans',sans-serif;font-size:14.5px;color:#fff;transform-origin:16.79px 0;transform:scaleX(1.0700);">Write</div><div style="left:692px;top:834px;width:73px;height:21px;background:#fff"></div><div id="f220" class="t" style="left:711.71px;top:838.23px;font-family:'Liberation Sans',sans-serif;font-size:14.5px;color:#111;transform-origin:16.79px 0;transform:scaleX(1.0700);">Write</div><div style="left:766px;top:813px;width:72px;height:20px;background:#ff0099"></div><div id="f221" class="t" style="left:779.84px;top:816.23px;font-family:'Liberation Sans',sans-serif;font-size:14.5px;color:#fff;transform-origin:22.16px 0;transform:scaleX(1.0700);">A-ACK</div><div style="left:766px;top:834px;width:72px;height:21px;background:#fff"></div><div id="f222" class="t" style="left:779.84px;top:838.23px;font-family:'Liberation Sans',sans-serif;font-size:14.5px;color:#111;transform-origin:22.16px 0;transform:scaleX(1.0700);">A-ACK</div><div style="left:839px;top:813px;width:58px;height:20px;background:#33cc33"></div><div id="f223" class="t" style="left:852.68px;top:816.23px;font-family:'Liberation Sans',sans-serif;font-size:14.5px;color:#fff;transform-origin:15.32px 0;transform:scaleX(1.0700);">Data</div><div style="left:839px;top:834px;width:58px;height:21px;background:#fff"></div><div id="f224" class="t" style="left:851.06px;top:838.23px;font-family:'Liberation Sans',sans-serif;font-size:14.5px;color:#111;transform-origin:16.94px 0;transform:scaleX(1.0700);">0X18</div><div style="left:898px;top:813px;width:72px;height:20px;background:#99cc99"></div><div id="f225" class="t" style="left:911.44px;top:816.23px;font-family:'Liberation Sans',sans-serif;font-size:14.5px;color:#eef4ee;transform-origin:22.56px 0;transform:scaleX(1.0700);">D-ACK</div><div style="left:898px;top:834px;width:72px;height:21px;background:#fff"></div><div id="f226" class="t" style="left:911.44px;top:838.23px;font-family:'Liberation Sans',sans-serif;font-size:14.5px;color:#111;transform-origin:22.56px 0;transform:scaleX(1.0700);">D-ACK</div><div style="left:971px;top:813px;width:58px;height:20px;background:#33cc33"></div><div id="f227" class="t" style="left:984.68px;top:816.23px;font-family:'Liberation Sans',sans-serif;font-size:14.5px;color:#fff;transform-origin:15.32px 0;transform:scaleX(1.0700);">Data</div><div style="left:971px;top:834px;width:58px;height:21px;background:#fff"></div><div id="f228" class="t" style="left:983.06px;top:838.23px;font-family:'Liberation Sans',sans-serif;font-size:14.5px;color:#111;transform-origin:16.94px 0;transform:scaleX(1.0700);">0X29</div><div style="left:1030px;top:813px;width:72px;height:20px;background:#99cc99"></div><div id="f229" class="t" style="left:1043.44px;top:816.23px;font-family:'Liberation Sans',sans-serif;font-size:14.5px;color:#eef4ee;transform-origin:22.56px 0;transform:scaleX(1.0700);">D-ACK</div><div style="left:1030px;top:834px;width:72px;height:21px;background:#fff"></div><div id="f230" class="t" style="left:1043.44px;top:838.23px;font-family:'Liberation Sans',sans-serif;font-size:14.5px;color:#111;transform-origin:22.56px 0;transform:scaleX(1.0700);">D-ACK</div><div style="left:1103px;top:813px;width:59px;height:20px;background:#33cc33"></div><div id="f231" class="t" style="left:1117.18px;top:816.23px;font-family:'Liberation Sans',sans-serif;font-size:14.5px;color:#fff;transform-origin:15.32px 0;transform:scaleX(1.0700);">Data</div><div style="left:1103px;top:834px;width:59px;height:21px;background:#fff"></div><div id="f232" class="t" style="left:1114.76px;top:838.23px;font-family:'Liberation Sans',sans-serif;font-size:14.5px;color:#111;transform-origin:17.74px 0;transform:scaleX(1.0700);">0X3A</div><div style="left:1163px;top:813px;width:72px;height:20px;background:#99cc99"></div><div id="f233" class="t" style="left:1176.44px;top:816.23px;font-family:'Liberation Sans',sans-serif;font-size:14.5px;color:#eef4ee;transform-origin:22.56px 0;transform:scaleX(1.0700);">D-ACK</div><div style="left:1163px;top:834px;width:72px;height:21px;background:#fff"></div><div id="f234" class="t" style="left:1176.44px;top:838.23px;font-family:'Liberation Sans',sans-serif;font-size:14.5px;color:#111;transform-origin:22.56px 0;transform:scaleX(1.0700);">D-ACK</div><div style="left:318px;top:859px;width:280px;height:21px;background:#000"></div><div style="left:319px;top:860px;width:87px;height:20px;background:#333399"></div><div id="f235" class="t" style="left:338.72px;top:861.69px;font-family:'Liberation Sans',sans-serif;font-size:17.5px;color:#fff;transform-origin:23.78px 0;transform:scaleX(1.0000);">封包 <span style='font-size:12px'>#</span></div><div style="left:407px;top:860px;width:100px;height:20px;background:#333399"></div><div id="f236" class="t" style="left:439.00px;top:861.69px;font-family:'Liberation Sans',sans-serif;font-size:17.5px;color:#fff;transform-origin:18.00px 0;transform:scaleX(1.0000);">名稱</div><div style="left:508px;top:860px;width:89px;height:20px;background:#333399"></div><div id="f237" class="t" style="left:525.50px;top:861.69px;font-family:'Liberation Sans',sans-serif;font-size:17.5px;color:#fff;transform-origin:27.00px 0;transform:scaleX(1.0000);">起始點</div><div style="left:601px;top:859px;width:1065px;height:21px;background:#000"></div><div style="left:602px;top:860px;width:79px;height:20px;background:#ff6633"></div><div id="f238" class="t" style="left:614.90px;top:863.23px;font-family:'Liberation Sans',sans-serif;font-size:14.5px;color:#fff;transform-origin:26.60px 0;transform:scaleX(1.0700);">Address</div><div style="left:682px;top:860px;width:58px;height:20px;background:#3366ff"></div><div id="f239" class="t" style="left:693.66px;top:863.23px;font-family:'Liberation Sans',sans-serif;font-size:14.5px;color:#fff;transform-origin:17.34px 0;transform:scaleX(1.0700);">Read</div><div style="left:741px;top:860px;width:72px;height:20px;background:#ff0099"></div><div id="f240" class="t" style="left:754.84px;top:863.23px;font-family:'Liberation Sans',sans-serif;font-size:14.5px;color:#fff;transform-origin:22.16px 0;transform:scaleX(1.0700);">A-ACK</div><div style="left:814px;top:860px;width:58px;height:20px;background:#33cc33"></div><div id="f241" class="t" style="left:827.68px;top:863.23px;font-family:'Liberation Sans',sans-serif;font-size:14.5px;color:#fff;transform-origin:15.32px 0;transform:scaleX(1.0700);">Data</div><div style="left:873px;top:860px;width:72px;height:20px;background:#99cc99"></div><div id="f242" class="t" style="left:886.44px;top:863.23px;font-family:'Liberation Sans',sans-serif;font-size:14.5px;color:#eef4ee;transform-origin:22.56px 0;transform:scaleX(1.0700);">D-ACK</div><div style="left:946px;top:860px;width:59px;height:20px;background:#33cc33"></div><div id="f243" class="t" style="left:960.18px;top:863.23px;font-family:'Liberation Sans',sans-serif;font-size:14.5px;color:#fff;transform-origin:15.32px 0;transform:scaleX(1.0700);">Data</div><div style="left:1006px;top:860px;width:72px;height:20px;background:#99cc99"></div><div id="f244" class="t" style="left:1019.44px;top:863.23px;font-family:'Liberation Sans',sans-serif;font-size:14.5px;color:#eef4ee;transform-origin:22.56px 0;transform:scaleX(1.0700);">D-ACK</div><div style="left:1079px;top:860px;width:58px;height:20px;background:#33cc33"></div><div id="f245" class="t" style="left:1092.68px;top:863.23px;font-family:'Liberation Sans',sans-serif;font-size:14.5px;color:#fff;transform-origin:15.32px 0;transform:scaleX(1.0700);">Data</div><div style="left:1138px;top:860px;width:72px;height:20px;background:#99cc99"></div><div id="f246" class="t" style="left:1151.44px;top:863.23px;font-family:'Liberation Sans',sans-serif;font-size:14.5px;color:#eef4ee;transform-origin:22.56px 0;transform:scaleX(1.0700);">D-ACK</div><div style="left:1211px;top:860px;width:58px;height:20px;background:#33cc33"></div><div id="f247" class="t" style="left:1224.68px;top:863.23px;font-family:'Liberation Sans',sans-serif;font-size:14.5px;color:#fff;transform-origin:15.32px 0;transform:scaleX(1.0700);">Data</div><div style="left:1270px;top:860px;width:72px;height:20px;background:#99cc99"></div><div id="f248" class="t" style="left:1283.44px;top:863.23px;font-family:'Liberation Sans',sans-serif;font-size:14.5px;color:#eef4ee;transform-origin:22.56px 0;transform:scaleX(1.0700);">D-ACK</div><div style="left:1343px;top:860px;width:58px;height:20px;background:#33cc33"></div><div id="f249" class="t" style="left:1356.68px;top:863.23px;font-family:'Liberation Sans',sans-serif;font-size:14.5px;color:#fff;transform-origin:15.32px 0;transform:scaleX(1.0700);">Data</div><div style="left:1402px;top:860px;width:72px;height:20px;background:#99cc99"></div><div id="f250" class="t" style="left:1415.44px;top:863.23px;font-family:'Liberation Sans',sans-serif;font-size:14.5px;color:#eef4ee;transform-origin:22.56px 0;transform:scaleX(1.0700);">D-ACK</div><div style="left:1475px;top:860px;width:58px;height:20px;background:#33cc33"></div><div id="f251" class="t" style="left:1488.68px;top:863.23px;font-family:'Liberation Sans',sans-serif;font-size:14.5px;color:#fff;transform-origin:15.32px 0;transform:scaleX(1.0700);">Data</div><div style="left:1534px;top:860px;width:72px;height:20px;background:#99cc99"></div><div id="f252" class="t" style="left:1547.44px;top:863.23px;font-family:'Liberation Sans',sans-serif;font-size:14.5px;color:#eef4ee;transform-origin:22.56px 0;transform:scaleX(1.0700);">D-ACK</div><div style="left:1607px;top:860px;width:58px;height:20px;background:#33cc33"></div><div id="f253" class="t" style="left:1620.68px;top:863.23px;font-family:'Liberation Sans',sans-serif;font-size:14.5px;color:#fff;transform-origin:15.32px 0;transform:scaleX(1.0700);">Data</div><svg style="left:317px;top:776px" width="11" height="21"><path d="M0 0L10 10L0 20z" fill="#f00"/></svg><div style="left:1745px;top:188px;width:219px;height:692px;background:#222"></div><div style="left:1745px;top:188px;width:219px;height:21px;background:linear-gradient(#3a3a3a 0px,#4a4a4a 4px,#333 10px,#1e1e1e 16px,#141414 21px)"></div><svg style="left:1917px;top:191px" width="16" height="14"><circle cx="10" cy="6" r="4.5" fill="#ccc"/><path d="M8 8L2 13" stroke="#aaa" stroke-width="1.5"/></svg><svg style="left:1943px;top:192px" width="13" height="13"><path d="M1.5 1.5L11.5 11.5M11.5 1.5L1.5 11.5" stroke="#fff" stroke-width="2.5"/></svg><div style="left:1745px;top:209px;width:219px;height:13px;background:linear-gradient(#3e3e3e,#444 40%,#3a3a3a)"></div><div style="left:1745px;top:222px;width:219px;height:8px;background:#262626"></div><div style="left:1745px;top:230px;width:219px;height:2px;background:#0a0a0a"></div><div id="f254" class="t" style="left:1826.00px;top:212.30px;font-family:'Liberation Sans',sans-serif;font-size:15px;color:#fff;transform-origin:30.00px 0;transform:scaleX(1.0333);">波形縮放</div><div style="left:1759px;top:239px;width:129px;height:22px;background:#fff;border:1px solid #999"></div><div style="left:1868px;top:240px;width:19px;height:20px;background:linear-gradient(#f0f0f0,#d4d4d4);border-left:1px solid #bbb"></div><svg style="left:1871px;top:246px" width="13" height="8"><path d="M1 1L6.5 6L12 1" stroke="#444" stroke-width="2" fill="none"/></svg><div id="f255" class="t" style="left:1762.00px;top:243.57px;font-family:'Liberation Sans',sans-serif;font-size:13.5px;color:#111;transform-origin:0 0;transform:scaleX(1.0343);">1.942558us</div><svg style="left:1899px;top:237px" width="26" height="26"><circle cx="10" cy="10" r="7.5" fill="#222" stroke="#19a0ff" stroke-width="2.5"/><path d="M6 10H14M10 6V14" stroke="#9e2" stroke-width="3"/><path d="M15 15L22 22" stroke="#1a6ee8" stroke-width="4.5"/></svg><svg style="left:1933px;top:237px" width="26" height="26"><circle cx="10" cy="10" r="7.5" fill="#222" stroke="#19a0ff" stroke-width="2.5"/><path d="M6 10H14" stroke="#9e2" stroke-width="3"/><path d="M15 15L22 22" stroke="#1a6ee8" stroke-width="4.5"/></svg><div style="left:1745px;top:266px;width:219px;height:13px;background:linear-gradient(#3e3e3e,#444 40%,#3a3a3a)"></div><div style="left:1745px;top:279px;width:219px;height:8px;background:#262626"></div><div style="left:1745px;top:287px;width:219px;height:2px;background:#0a0a0a"></div><div id="f256" class="t" style="left:1818.50px;top:269.30px;font-family:'Liberation Sans',sans-serif;font-size:15px;color:#fff;transform-origin:37.50px 0;transform:scaleX(1.0267);">記憶體容量</div><svg style="left:1752px;top:316px" width="212" height="82"><defs><linearGradient id="mg" x1="0" y1="0" x2="0" y2="1"><stop offset="0" stop-color="#9f0"/><stop offset=".22" stop-color="#9f0"/><stop offset=".24" stop-color="#ac0"/><stop offset=".35" stop-color="#8c2"/><stop offset=".6" stop-color="#3c0"/><stop offset=".92" stop-color="#2c0"/><stop offset="1" stop-color="#284"/></linearGradient><linearGradient id="mo" x1="0" y1="0" x2="0" y2="1"><stop offset="0" stop-color="#fe0"/><stop offset=".22" stop-color="#fd0"/><stop offset=".35" stop-color="#fb0"/><stop offset=".6" stop-color="#f90"/><stop offset=".92" stop-color="#f80"/><stop offset="1" stop-color="#f60"/></linearGradient></defs><path d="M1 66V18Q1 1 18 1H194Q210 1 210 18V66L196 81H15z" fill="#3c3c3c"/><path d="M1.5 58V18Q1.5 1.5 18 1.5H194Q209.5 1.5 209.5 18V58" stroke="#34347a" stroke-width="3" fill="none"/><path d="M5 64V20Q5 6 20 6H192Q206 6 206 20V64L194 77H17z" fill="#464646"/><rect x="7.0" y="13" width="8.5" height="55" rx="4" fill="url(#mg)"/><rect x="18.0" y="13" width="8.5" height="55" rx="4" fill="url(#mg)"/><rect x="29.0" y="13" width="8.5" height="55" rx="4" fill="url(#mg)"/><rect x="40.0" y="13" width="8.5" height="55" rx="4" fill="url(#mg)"/><rect x="51.0" y="13" width="8.5" height="55" rx="4" fill="url(#mg)"/><rect x="62.0" y="13" width="8.5" height="55" rx="4" fill="url(#mg)"/><rect x="73.0" y="13" width="8.5" height="55" rx="4" fill="url(#mg)"/><rect x="84.0" y="13" width="8.5" height="55" rx="4" fill="url(#mo)"/><rect x="95.0" y="13" width="8.5" height="55" rx="4" fill="url(#mo)"/><rect x="106.0" y="13" width="8.5" height="55" rx="4" fill="#fff"/><rect x="117.0" y="13" width="8.5" height="55" rx="4" fill="#fff"/><rect x="128.0" y="13" width="8.5" height="55" rx="4" fill="#fff"/><rect x="139.0" y="13" width="8.5" height="55" rx="4" fill="#fff"/><rect x="150.0" y="13" width="8.5" height="55" rx="4" fill="#fff"/><rect x="161.0" y="13" width="8.5" height="55" rx="4" fill="#fff"/><rect x="172.0" y="13" width="8.5" height="55" rx="4" fill="#fff"/><rect x="183.0" y="13" width="8.5" height="55" rx="4" fill="#fff"/><rect x="194.0" y="13" width="8.5" height="55" rx="4" fill="#fff"/></svg><svg style="left:1832px;top:294px" width="40" height="38"><path d="M2 3Q2 1 4 1H35Q37 1 37 3V19H27L19 35L12 19H2z" fill="url(#bm)"/><defs><linearGradient id="bm" x1="0" y1="0" x2="0" y2="1"><stop offset="0" stop-color="#e0109a"/><stop offset=".5" stop-color="#d00080"/><stop offset="1" stop-color="#c00050"/></linearGradient></defs></svg><div id="f257" class="t" style="left:1843.01px;top:300.27px;font-family:'Liberation Sans',sans-serif;font-size:11.5px;color:#fff;transform-origin:7.99px 0;transform:scaleX(1.1887);">2M</div><div style="left:1745px;top:400px;width:219px;height:13px;background:linear-gradient(#3e3e3e,#444 40%,#3a3a3a)"></div><div style="left:1745px;top:413px;width:219px;height:8px;background:#262626"></div><div style="left:1745px;top:421px;width:219px;height:2px;background:#0a0a0a"></div><div id="f258" class="t" style="left:1811.00px;top:403.30px;font-family:'Liberation Sans',sans-serif;font-size:15px;color:#fff;transform-origin:45.00px 0;transform:scaleX(1.0333);">內部取樣頻率</div><svg style="left:1946px;top:405px" width="14" height="12"><path d="M1 1L6 6L1 11zM7 1L12 6L7 11z" fill="#ddd"/></svg><svg style="left:1780px;top:410px" width="150" height="160"><defs><radialGradient id="kn" cx=".45" cy=".35" r=".65"><stop offset="0" stop-color="#8a8a8a"/><stop offset=".45" stop-color="#666"/><stop offset=".8" stop-color="#3a3a3a"/><stop offset="1" stop-color="#222"/></radialGradient><radialGradient id="kr" cx=".5" cy=".5" r=".5"><stop offset=".8" stop-color="#111"/><stop offset="1" stop-color="#333"/></radialGradient></defs><path d="M34.4 117.6L28.0 124.0" stroke="#aaa" stroke-width="1.2"/><path d="M30.7 115.0L26.9 118.3" stroke="#aaa" stroke-width="1.2"/><path d="M27.9 111.5L23.8 114.4" stroke="#aaa" stroke-width="1.2"/><path d="M25.4 107.8L21.1 110.4" stroke="#aaa" stroke-width="1.2"/><path d="M23.2 103.9L18.8 106.1" stroke="#aaa" stroke-width="1.2"/><path d="M21.3 99.8L16.7 101.7" stroke="#aaa" stroke-width="1.2"/><path d="M20.7 95.3L12.2 98.1" stroke="#aaa" stroke-width="1.2"/><path d="M18.6 91.3L13.7 92.5" stroke="#aaa" stroke-width="1.2"/><path d="M17.7 86.9L12.8 87.7" stroke="#aaa" stroke-width="1.2"/><path d="M17.2 82.5L12.2 82.9" stroke="#aaa" stroke-width="1.2"/><path d="M17.0 78.0L12.0 78.0" stroke="#aaa" stroke-width="1.2"/><path d="M17.2 73.5L12.2 73.1" stroke="#aaa" stroke-width="1.2"/><path d="M18.7 69.2L9.8 67.8" stroke="#aaa" stroke-width="1.2"/><path d="M18.6 64.7L13.7 63.5" stroke="#aaa" stroke-width="1.2"/><path d="M19.8 60.4L15.0 58.8" stroke="#aaa" stroke-width="1.2"/><path d="M21.3 56.2L16.7 54.3" stroke="#aaa" stroke-width="1.2"/><path d="M23.2 52.1L18.8 49.9" stroke="#aaa" stroke-width="1.2"/><path d="M25.4 48.2L21.1 45.6" stroke="#aaa" stroke-width="1.2"/><path d="M28.7 45.1L21.4 39.8" stroke="#aaa" stroke-width="1.2"/><path d="M30.7 41.0L26.9 37.7" stroke="#aaa" stroke-width="1.2"/><path d="M33.7 37.7L30.2 34.2" stroke="#aaa" stroke-width="1.2"/><path d="M37.0 34.7L33.7 30.9" stroke="#aaa" stroke-width="1.2"/><path d="M40.5 31.9L37.6 27.8" stroke="#aaa" stroke-width="1.2"/><path d="M44.2 29.4L41.6 25.1" stroke="#aaa" stroke-width="1.2"/><path d="M48.6 28.1L44.5 20.1" stroke="#aaa" stroke-width="1.2"/><path d="M52.2 25.3L50.3 20.7" stroke="#aaa" stroke-width="1.2"/><path d="M56.4 23.8L54.8 19.0" stroke="#aaa" stroke-width="1.2"/><path d="M60.7 22.6L59.5 17.7" stroke="#aaa" stroke-width="1.2"/><path d="M65.1 21.7L64.3 16.8" stroke="#aaa" stroke-width="1.2"/><path d="M69.5 21.2L69.1 16.2" stroke="#aaa" stroke-width="1.2"/><path d="M74.0 22.0L74.0 13.0" stroke="#aaa" stroke-width="1.2"/><path d="M78.5 21.2L78.9 16.2" stroke="#aaa" stroke-width="1.2"/><path d="M82.9 21.7L83.7 16.8" stroke="#aaa" stroke-width="1.2"/><path d="M87.3 22.6L88.5 17.7" stroke="#aaa" stroke-width="1.2"/><path d="M91.6 23.8L93.2 19.0" stroke="#aaa" stroke-width="1.2"/><path d="M95.8 25.3L97.7 20.7" stroke="#aaa" stroke-width="1.2"/><path d="M99.4 28.1L103.5 20.1" stroke="#aaa" stroke-width="1.2"/><path d="M103.8 29.4L106.4 25.1" stroke="#aaa" stroke-width="1.2"/><path d="M107.5 31.9L110.4 27.8" stroke="#aaa" stroke-width="1.2"/><path d="M111.0 34.7L114.3 30.9" stroke="#aaa" stroke-width="1.2"/><path d="M114.3 37.7L117.8 34.2" stroke="#aaa" stroke-width="1.2"/><path d="M117.3 41.0L121.1 37.7" stroke="#aaa" stroke-width="1.2"/><path d="M119.3 45.1L126.6 39.8" stroke="#aaa" stroke-width="1.2"/><path d="M122.6 48.2L126.9 45.6" stroke="#aaa" stroke-width="1.2"/><path d="M124.8 52.1L129.2 49.9" stroke="#aaa" stroke-width="1.2"/><path d="M126.7 56.2L131.3 54.3" stroke="#aaa" stroke-width="1.2"/><path d="M128.2 60.4L133.0 58.8" stroke="#aaa" stroke-width="1.2"/><path d="M129.4 64.7L134.3 63.5" stroke="#aaa" stroke-width="1.2"/><path d="M129.3 69.2L138.2 67.8" stroke="#aaa" stroke-width="1.2"/><path d="M130.8 73.5L135.8 73.1" stroke="#aaa" stroke-width="1.2"/><path d="M131.0 78.0L136.0 78.0" stroke="#aaa" stroke-width="1.2"/><path d="M130.8 82.5L135.8 82.9" stroke="#aaa" stroke-width="1.2"/><path d="M130.3 86.9L135.2 87.7" stroke="#aaa" stroke-width="1.2"/><path d="M129.4 91.3L134.3 92.5" stroke="#aaa" stroke-width="1.2"/><path d="M127.3 95.3L135.8 98.1" stroke="#aaa" stroke-width="1.2"/><path d="M126.7 99.8L131.3 101.7" stroke="#aaa" stroke-width="1.2"/><path d="M124.8 103.9L129.2 106.1" stroke="#aaa" stroke-width="1.2"/><path d="M122.6 107.8L126.9 110.4" stroke="#aaa" stroke-width="1.2"/><path d="M120.1 111.5L124.2 114.4" stroke="#aaa" stroke-width="1.2"/><path d="M117.3 115.0L121.1 118.3" stroke="#aaa" stroke-width="1.2"/><path d="M113.6 117.6L120.0 124.0" stroke="#aaa" stroke-width="1.2"/><circle cx="74" cy="78" r="46" fill="#151515" stroke="#2a2a70" stroke-width="1.5"/><circle cx="74" cy="80" r="40" fill="#0e0e0e"/><circle cx="73" cy="76" r="36" fill="url(#kn)"/></svg><div style="left:1817px;top:450px;width:72px;height:72px;border-radius:50%;background:conic-gradient(from 20deg,#3a3a3a,#8a8a8a 12%,#4a4a4a 25%,#7a7a7a 37%,#333 50%,#888 62%,#444 75%,#9a9a9a 87%,#3a3a3a)"></div><div style="left:1817px;top:450px;width:72px;height:72px;border-radius:50%;background:radial-gradient(circle at 50% 50%,rgba(90,90,90,.0) 0,rgba(60,60,60,.2) 55%,rgba(20,20,20,.75) 100%)"></div><div style="left:1823px;top:456px;width:60px;height:60px;border-radius:50%;border:1px solid rgba(160,160,160,.35)"></div><svg style="left:1780px;top:410px" width="150" height="160"><path d="M106 37L93 51L100 55z" fill="#f00"/></svg><div id="f259" class="t" style="left:1779.00px;top:540.27px;font-family:'Liberation Sans',sans-serif;font-size:11.5px;color:#eee;font-weight:bold;transform-origin:0 0;transform:scaleX(0.9680);">10Hz</div><div id="f260" class="t" style="left:1891.00px;top:540.27px;font-family:'Liberation Sans',sans-serif;font-size:11.5px;color:#eee;font-weight:bold;transform-origin:0 0;transform:scaleX(0.9807);">400MHz</div><div style="left:1778px;top:552px;width:155px;height:22px;background:#fff;border:1px solid #999"></div><div style="left:1913px;top:553px;width:19px;height:20px;background:linear-gradient(#f0f0f0,#d4d4d4);border-left:1px solid #bbb"></div><svg style="left:1916px;top:559px" width="13" height="8"><path d="M1 1L6.5 6L12 1" stroke="#444" stroke-width="2" fill="none"/></svg><div id="f261" class="t" style="left:1782.00px;top:557.42px;font-family:'Liberation Sans',sans-serif;font-size:12.5px;color:#112;transform-origin:0 0;transform:scaleX(0.8880);">1MHz</div><div style="left:1745px;top:582px;width:219px;height:13px;background:linear-gradient(#3e3e3e,#444 40%,#3a3a3a)"></div><div style="left:1745px;top:595px;width:219px;height:8px;background:#262626"></div><div style="left:1745px;top:603px;width:219px;height:2px;background:#0a0a0a"></div><div id="f262" class="t" style="left:1826.00px;top:585.30px;font-family:'Liberation Sans',sans-serif;font-size:15px;color:#fff;transform-origin:30.00px 0;transform:scaleX(1.0333);">觸發位置</div><svg style="left:1764px;top:612px" width="184" height="28"><defs><linearGradient id="ts" x1="0" y1="0" x2="0" y2="1"><stop offset="0" stop-color="#00c837"/><stop offset=".3" stop-color="#00c033"/><stop offset=".35" stop-color="#009a10"/><stop offset=".55" stop-color="#0a9a0a"/><stop offset=".6" stop-color="#4aaa00"/><stop offset=".75" stop-color="#9c0"/><stop offset="1" stop-color="#ef0"/></linearGradient></defs><rect x="0.5" y="0.5" width="182" height="27" rx="3" fill="url(#ts)" stroke="#999"/><rect x="19.4" y="17" width="2" height="9" fill="#fff"/><rect x="37.5" y="17" width="2" height="9" fill="#fff"/><rect x="55.6" y="17" width="2" height="9" fill="#fff"/><rect x="73.7" y="17" width="2" height="9" fill="#fff"/><rect x="91.8" y="17" width="2" height="9" fill="#fff"/><rect x="109.9" y="17" width="2" height="9" fill="#fff"/><rect x="128.0" y="17" width="2" height="9" fill="#fff"/><rect x="146.1" y="17" width="2" height="9" fill="#fff"/><rect x="164.2" y="17" width="2" height="9" fill="#fff"/><path d="M13 3L17 -4H23L27 3L21 18L19 18z" fill="#ff5500"/><path d="M17 -3L20 -4L22 17L19 17z" fill="#ffa000"/></svg><div id="f263" class="t" style="left:1949.00px;top:614.69px;font-family:'Liberation Sans',sans-serif;font-size:11px;color:#eee;transform-origin:0 0;">%</div><div id="f264" class="t" style="left:1763.30px;top:646.77px;font-family:'Liberation Sans',sans-serif;font-size:11.5px;color:#eee;font-weight:bold;transform-origin:3.20px 0;transform:scaleX(0.9200);">0</div><div id="f265" class="t" style="left:1777.60px;top:646.77px;font-family:'Liberation Sans',sans-serif;font-size:11.5px;color:#ffa020;font-weight:bold;transform-origin:6.40px 0;transform:scaleX(0.9200);">10</div><div id="f266" class="t" style="left:1794.60px;top:646.77px;font-family:'Liberation Sans',sans-serif;font-size:11.5px;color:#eee;font-weight:bold;transform-origin:6.40px 0;transform:scaleX(0.9200);">20</div><div id="f267" class="t" style="left:1814.10px;top:646.77px;font-family:'Liberation Sans',sans-serif;font-size:11.5px;color:#eee;font-weight:bold;transform-origin:6.40px 0;transform:scaleX(0.9200);">30</div><div id="f268" class="t" style="left:1831.60px;top:646.77px;font-family:'Liberation Sans',sans-serif;font-size:11.5px;color:#eee;font-weight:bold;transform-origin:6.40px 0;transform:scaleX(0.9200);">40</div><div id="f269" class="t" style="left:1850.10px;top:646.77px;font-family:'Liberation Sans',sans-serif;font-size:11.5px;color:#eee;font-weight:bold;transform-origin:6.40px 0;transform:scaleX(0.9200);">50</div><div id="f270" class="t" style="left:1868.10px;top:646.77px;font-family:'Liberation Sans',sans-serif;font-size:11.5px;color:#eee;font-weight:bold;transform-origin:6.40px 0;transform:scaleX(0.9200);">60</div><div id="f271" class="t" style="left:1885.10px;top:646.77px;font-family:'Liberation Sans',sans-serif;font-size:11.5px;color:#eee;font-weight:bold;transform-origin:6.40px 0;transform:scaleX(0.9200);">70</div><div id="f272" class="t" style="left:1904.60px;top:646.77px;font-family:'Liberation Sans',sans-serif;font-size:11.5px;color:#eee;font-weight:bold;transform-origin:6.40px 0;transform:scaleX(0.9200);">80</div><div id="f273" class="t" style="left:1921.60px;top:646.77px;font-family:'Liberation Sans',sans-serif;font-size:11.5px;color:#eee;font-weight:bold;transform-origin:6.40px 0;transform:scaleX(0.9200);">90</div><div id="f274" class="t" style="left:1936.91px;top:646.77px;font-family:'Liberation Sans',sans-serif;font-size:11.5px;color:#eee;font-weight:bold;transform-origin:9.59px 0;transform:scaleX(0.9200);">100</div><svg style="left:1775px;top:699px" width="164" height="164"><defs><linearGradient id="nw" x1="0" y1="0" x2="0" y2="1"><stop offset="0" stop-color="#f4f4f4"/><stop offset=".3" stop-color="#d8d8d8"/><stop offset=".5" stop-color="#c4c4c4"/><stop offset=".7" stop-color="#d0d0d0"/><stop offset="1" stop-color="#ececec"/></linearGradient><linearGradient id="nwi" x1="0" y1="0" x2="0" y2="1"><stop offset="0" stop-color="#e0e0e0"/><stop offset=".5" stop-color="#c8c8c8"/><stop offset="1" stop-color="#d8d8d8"/></linearGradient></defs><circle cx="82" cy="82" r="81" fill="url(#nw)"/><path d="M25 25L139 139M139 25L25 139" stroke="#f8f8f8" stroke-width="2"/><path d="M26 24L140 138M138 24L24 138" stroke="#aaa" stroke-width="1"/><circle cx="82" cy="81" r="42" fill="url(#nwi)" stroke="#4ab0d0" stroke-width="1.5"/><path d="M40 81H124" stroke="#aaa" stroke-width="1"/><path d="M82 81V122" stroke="#aaa" stroke-width="1"/><path d="M74 19V9Q74 6 76 6Q78 6 78 9V16V5Q78 2 80 2Q82 2 82 5V16V4Q82 1 84 1Q86 1 86 4V16V7Q86 5 88 5Q90 5 90 7V22Q90 30 84 32H79Q73 30 70 24L66 17Q65 14 68 14Q70 14 72 18z" fill="#1a7ae8"/><rect x="77" y="33" width="11" height="3" fill="#1a7ae8"/><path d="M76 56L92 64L76 72z" fill="#7ccc22"/><path d="M60 92A9 9 0 1 0 74 88" stroke="#7ccc22" stroke-width="4" fill="none"/><path d="M56 88L62 96L66 87z" fill="#7ccc22"/><circle cx="65" cy="100" r="2" fill="#f60"/><path d="M92 92L102 100L92 108zM101 92L111 100L101 108z" fill="#7ccc22"/><circle cx="83" cy="141" r="12" fill="#1a8ae8" stroke="#cde" stroke-width="2"/><path d="M83 133V141H89" stroke="#fff" stroke-width="2" fill="none"/><path d="M8 91L18 82V87H30V95H18V100z" fill="#7ccc22"/><path d="M20 80L34 72" stroke="#f93" stroke-width="4"/><circle cx="6" cy="93" r="4" fill="#fff" stroke="#888"/><path d="M156 91L146 82V87H134V95H146V100z" fill="#7ccc22"/><path d="M144 80L130 72" stroke="#f93" stroke-width="4"/><circle cx="158" cy="93" r="4" fill="#fff" stroke="#888"/></svg><div style="left:310px;top:880px;width:1654px;height:23px;background:linear-gradient(#000 0px,#050505 10px,#222 23px)"></div><div id="f275" class="t" style="left:318.00px;top:885.30px;font-family:'Liberation Sans',sans-serif;font-size:15px;color:#fff;transform-origin:0 0;transform:scaleX(1.0000);">連線</div><div style="left:1289px;top:884px;width:475px;height:19px;background:linear-gradient(#fafafa 0px,#d8d8d8 4px,#a8a8a8 9px,#9a9a9a 11px,#c4c4c4 15px,#e6e6e6 19px)"></div><div style="left:1764px;top:882px;width:200px;height:21px;background:#111"></div><div style="left:1766px;top:883px;width:197px;height:20px;background:linear-gradient(#bfe0ff 0px,#8cc8ff 5px,#6ab6f8 10px,#8ccaff 15px,#bfe0ff 20px)"></div><div id="f276" class="t" style="left:1768.00px;top:885.30px;font-family:'Liberation Sans',sans-serif;font-size:15px;color:#000;transform-origin:0 0;transform:scaleX(1.0000);">就緒</div></body></html>
